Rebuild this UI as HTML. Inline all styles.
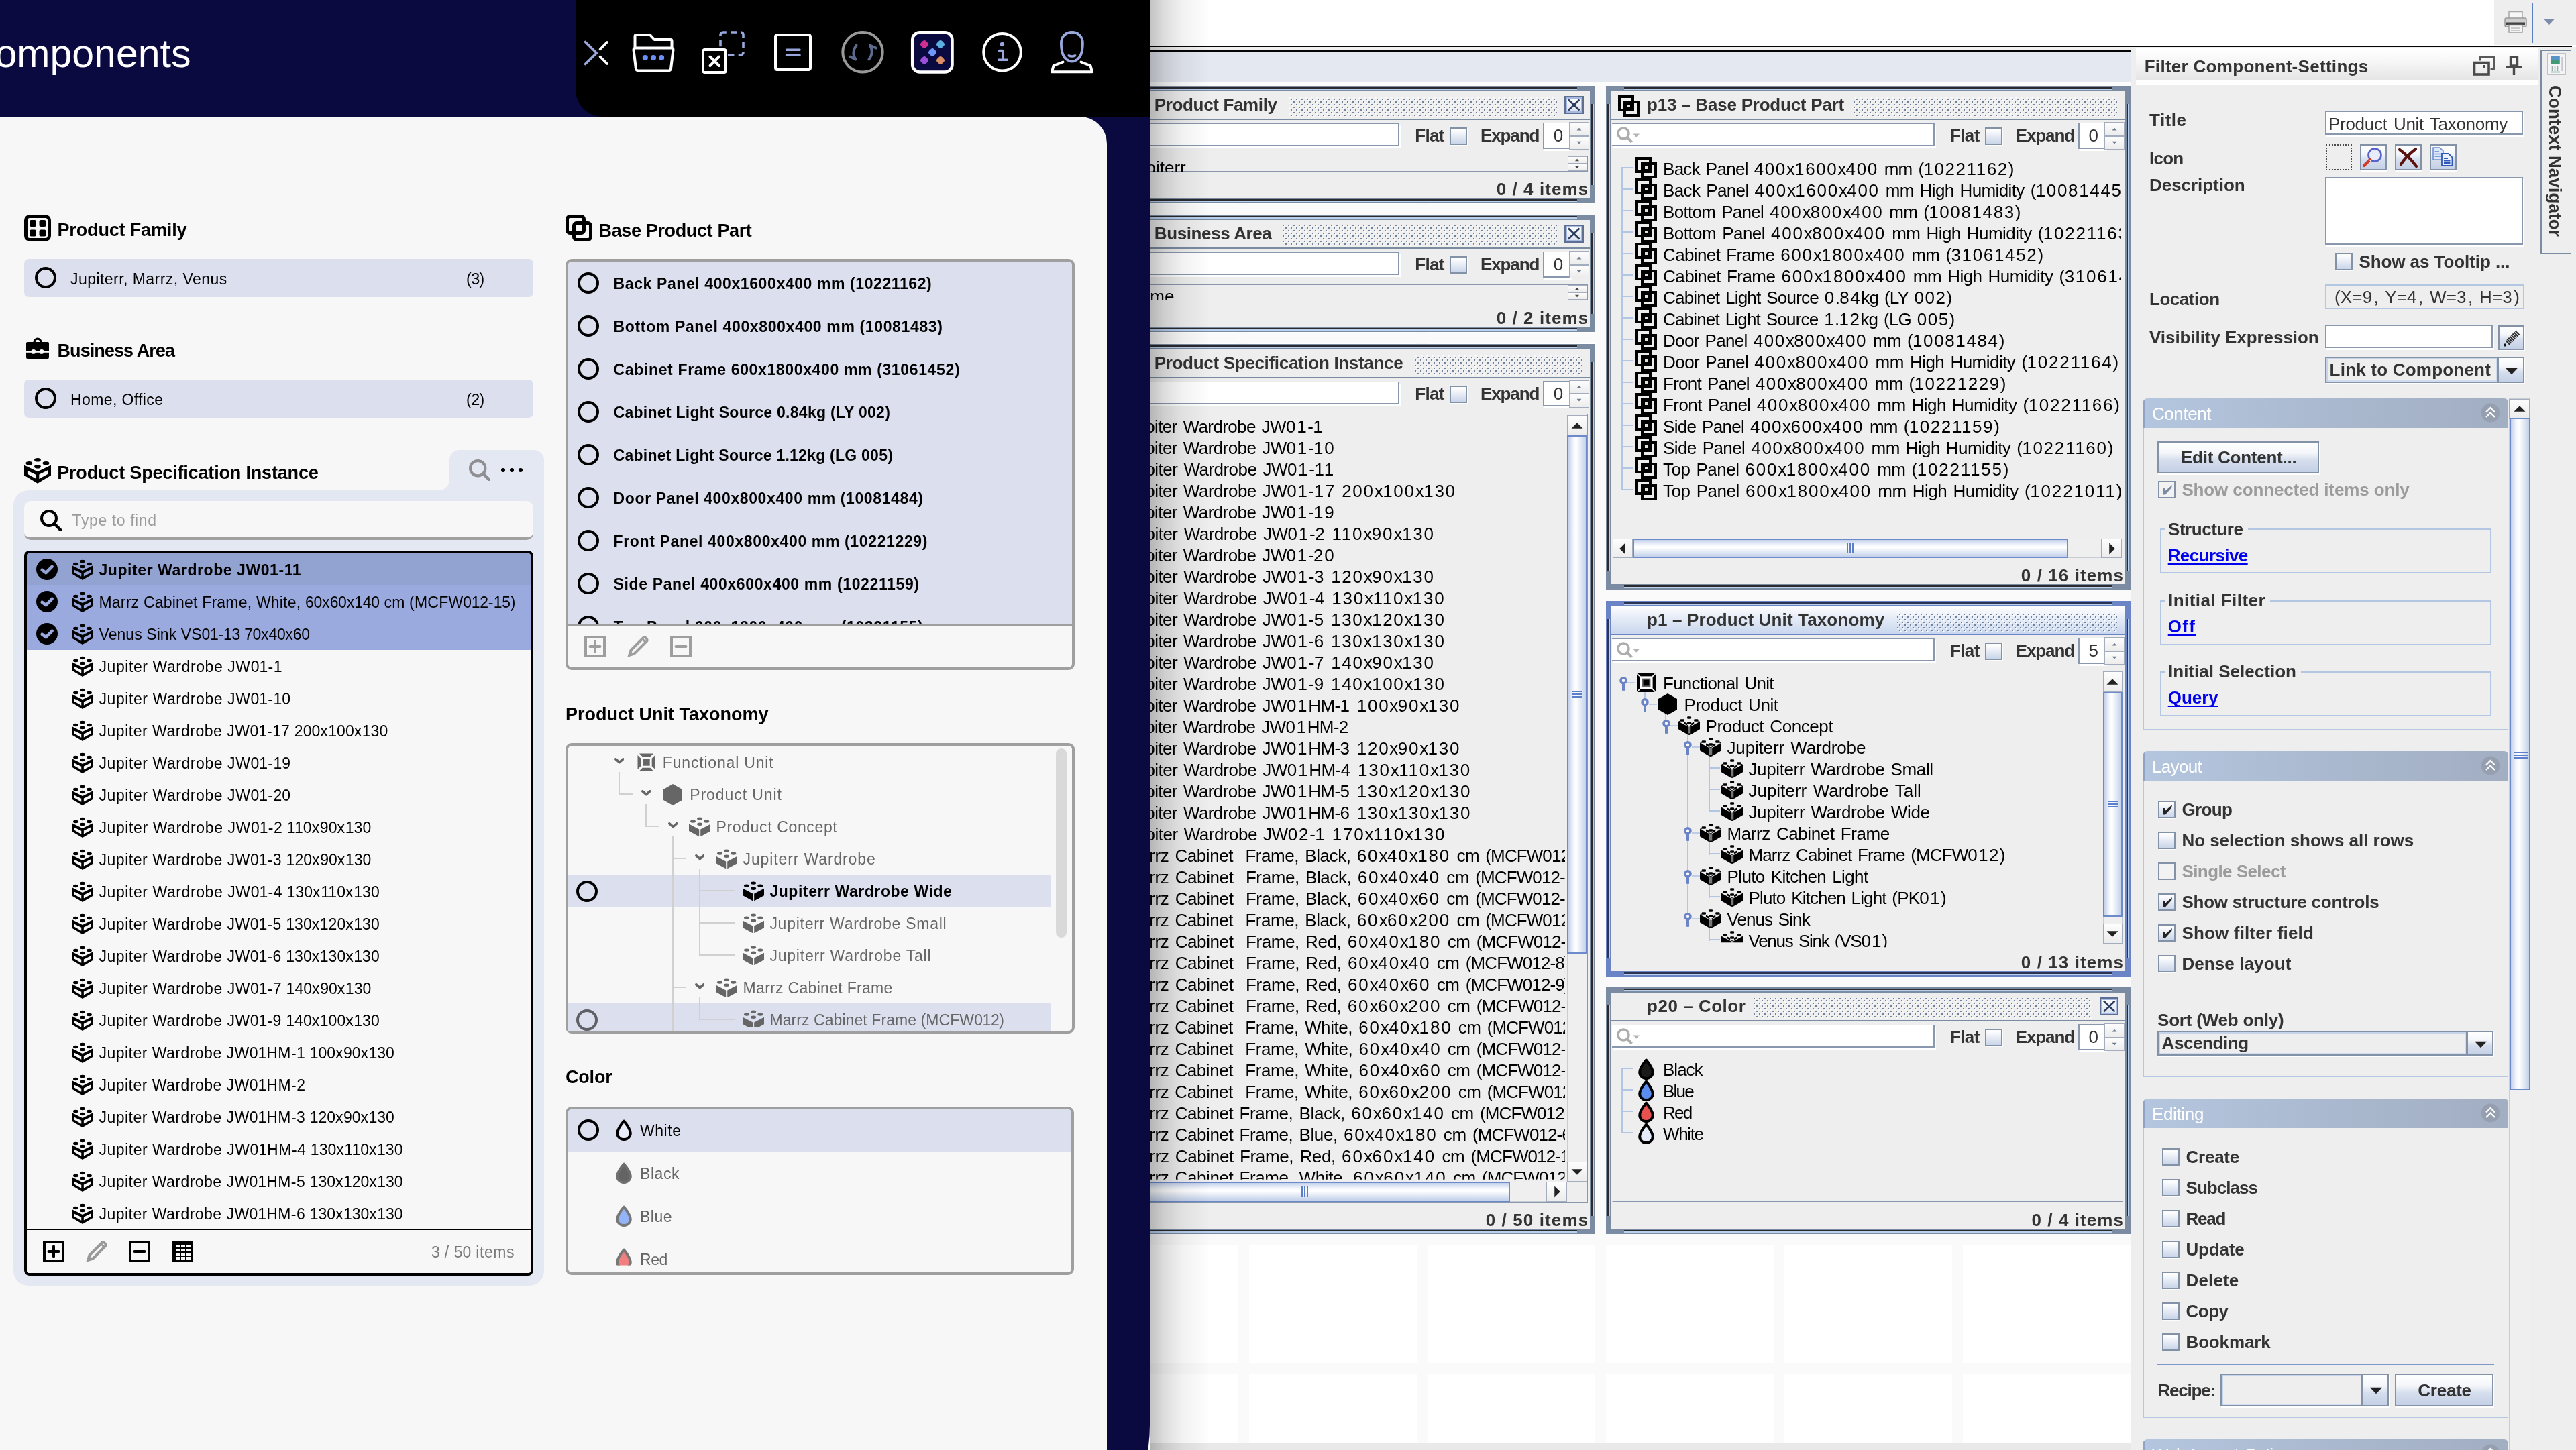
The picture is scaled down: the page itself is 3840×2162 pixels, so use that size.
<!DOCTYPE html><html><head><meta charset="utf-8"><title>Components</title><style>
html,body{margin:0;padding:0}
body{width:3840px;height:2162px;position:relative;overflow:hidden;background:#fafafa;font-family:"Liberation Sans",sans-serif;will-change:transform;}
body div,body svg{position:absolute;}
.t{white-space:pre;line-height:40px;height:40px;color:#000;letter-spacing:var(--l,0px);}
.l23 i{letter-spacing:calc(var(--l,0px) - 0.5px);}
.t i,.t em{font-style:normal;}
.l23{font-size:23px;}
.b23{font-size:23px;font-weight:bold;}
.h27{font-size:27px;font-weight:bold;}
.hd{font-size:59px;}
.s{font-size:26px;}
.sb{font-size:26px;font-weight:bold;color:#333;}

.cb{box-sizing:border-box;border:2px solid #8492a8;background:linear-gradient(#fdfdfe 10%,#e3e9f3 55%,#c9d5e9);box-shadow:1px 1px 0 rgba(255,255,255,.8);}
.cbd{box-sizing:border-box;border:2px solid #8492a8;background:#f2f2f2;}
.btn{box-sizing:border-box;border:2px solid #8492a8;background:linear-gradient(#ffffff,#f4f6fa 35%,#d5deed 60%,#c4d0e6);box-shadow:1px 2px 0 rgba(255,255,255,.9);}
.tf{box-sizing:border-box;background:#fff;border:2px solid #8a98ad;border-top-width:1.5px;box-shadow:2px 3px 0 #fff;}
.fr{background:#7b8ba1;}
.thv{box-sizing:border-box;border:2px solid #6d8acb;background:linear-gradient(to right,#c3d0ea,#f4f7fc 30%,#ffffff 45%,#dfe7f4 75%,#c3d0ea);}
.thh{box-sizing:border-box;border:2px solid #6d8acb;background:linear-gradient(#c3d0ea,#f4f7fc 30%,#ffffff 45%,#dfe7f4 75%,#c3d0ea);}
.sbb{box-sizing:border-box;border:1.5px solid #a3adbd;background:linear-gradient(#fdfdfd,#ececec);}
.trk{background:#efefef;box-sizing:border-box;border:1px solid #c8ccd4;}
.dots{background-image:radial-gradient(circle,#70829c 1.1px,rgba(0,0,0,0) 1.55px),radial-gradient(circle,#70829c 1.1px,rgba(0,0,0,0) 1.55px),radial-gradient(circle,#fff 1.1px,rgba(255,255,255,0) 1.6px),radial-gradient(circle,#fff 1.1px,rgba(255,255,255,0) 1.6px);background-size:8px 8px;background-position:0 0,4px 4px,1.5px 1.5px,5.5px 5.5px;}
.sec{background:linear-gradient(to right,#b4c6df,#aab9cf 50%,#a2aec2);border-radius:6px 6px 0 0;}
.s{word-spacing:2.400px}
.s i{letter-spacing:calc(var(--l,0px) + 2.300px)}
</style></head><body>
<svg width="0" height="0" style="position:absolute">
<defs>
<symbol id="lego" viewBox="0 0 40 40"><path fill-rule="evenodd" d="M0 11.4L20 21.2L40 11.4V26.8L20 38.8L0 26.8ZM4.9 19.7V24.7L17.8 32.1V25.9ZM22.3 25.6V31.9L35 24.9V19.3Z"/><ellipse cx="20" cy="3.8" rx="4.9" ry="2.8"/><ellipse cx="7.4" cy="8.8" rx="4.9" ry="2.8"/><ellipse cx="32.5" cy="8.8" rx="4.9" ry="2.8"/><ellipse cx="20" cy="13.8" rx="4.9" ry="2.8"/></symbol>
<symbol id="legof" viewBox="0 0 32.3 29.5"><path d="M0 10.6L15.2 18.4V29.3L0 21ZM17.2 18.4L32.3 10.6V21L17.2 29.3Z"/><ellipse cx="16.1" cy="2.6" rx="4" ry="2.2"/><ellipse cx="6" cy="6.6" rx="4" ry="2.2"/><ellipse cx="26.3" cy="6.6" rx="4" ry="2.2"/><ellipse cx="16.1" cy="10.7" rx="4" ry="2.2"/><path d="M0 10.6L2.2 8.6L5 10.2L9 10L11.5 11.6L14 13.6H18.3L21 11.5L23.5 10L27.5 10.2L30.2 8.6L32.3 10.6L17.2 18.4H15.2Z" opacity=".0"/></symbol>
<symbol id="pf" viewBox="0 0 40 40"><rect x="2.5" y="2.5" width="35" height="35" rx="6" fill="none" stroke="currentColor" stroke-width="5"/><rect x="8" y="8" width="10" height="10" rx="2.5"/><rect x="22.5" y="8" width="10" height="10" rx="2.5"/><rect x="8" y="22.5" width="10" height="10" rx="2.5"/><rect x="22.5" y="22.5" width="10" height="10" rx="2.5"/></symbol>
<symbol id="brief" viewBox="0 0 34 32"><path fill-rule="evenodd" d="M10.5 7a6.5 6.5 0 0 1 13 0h8.5a2 2 0 0 1 2 2v11.2H0V9a2 2 0 0 1 2-2ZM13.8 7h6.4a3.2 3.2 0 0 0-6.4 0Z"/><path d="M0 22.6h34V30a2 2 0 0 1-2 2H2a2 2 0 0 1-2-2Z"/><circle cx="10.8" cy="21.4" r="3.4" fill="#f7f7f7"/><circle cx="23" cy="21.4" r="3.4" fill="#f7f7f7"/><rect x="0" y="20.2" width="34" height="2.4" fill="#f7f7f7"/></symbol>
<symbol id="bpp" viewBox="0 0 40 40"><rect x="2.5" y="2.5" width="25" height="25" rx="4" fill="none" stroke="currentColor" stroke-width="5"/><rect x="12.5" y="12.5" width="25" height="25" rx="4" fill="none" stroke="currentColor" stroke-width="5"/></symbol>
<symbol id="fu" viewBox="0 0 27 27"><path d="M3 0.5H24L19.3 5.3H7.7ZM3 26.5H24L19.3 21.7H7.7ZM0.5 3V24L5.3 19.3V7.7ZM26.5 3V24L21.7 19.3V7.7Z"/><rect x="8.3" y="8.3" width="10.4" height="10.4"/></symbol>
<symbol id="hex" viewBox="0 0 28 32"><path d="M14 0L28 8V24L14 32L0 24V8Z"/></symbol>
<symbol id="chev" viewBox="0 0 16 10"><path d="M2 2L8 7.2L14 2" fill="none" stroke="currentColor" stroke-width="4" stroke-linecap="round" stroke-linejoin="round"/></symbol>
<symbol id="drop" viewBox="0 0 24 32"><path d="M12 2.5C12 2.5 2.2 14.5 2.2 20.8A9.8 9.3 0 0 0 21.8 20.8C21.8 14.5 12 2.5 12 2.5Z" stroke="currentColor" stroke-width="4" stroke-linejoin="round"/></symbol>
<symbol id="search" viewBox="0 0 32 32"><circle cx="13" cy="13" r="11" fill="none" stroke="currentColor" stroke-width="4"/><path d="M21 21L30 30" stroke="currentColor" stroke-width="4.4" stroke-linecap="round"/></symbol>
<symbol id="plus" viewBox="0 0 32 32"><rect x="2" y="2" width="28" height="28" fill="none" stroke="currentColor" stroke-width="4"/><path d="M8.5 16H23.5M16 8.5V23.5" stroke="currentColor" stroke-width="4" stroke-linecap="round"/></symbol>
<symbol id="minus" viewBox="0 0 32 32"><rect x="2" y="2" width="28" height="28" fill="none" stroke="currentColor" stroke-width="4"/><path d="M8.5 16H23.5" stroke="currentColor" stroke-width="4" stroke-linecap="round"/></symbol>
<symbol id="pencil" viewBox="0 0 32 32"><path fill-rule="evenodd" d="M0.3 31.7L3.6 20.6L22.6 1.6a4.2 4.2 0 0 1 6 0l1.8 1.8a4.2 4.2 0 0 1 0 6L11.4 28.4ZM6.6 25.4l3.2-1L25 9.2L22.8 7L7.6 22.2ZM24.6 4.6l2.8 2.8a1.4 1.4 0 0 0 0-2l-0.8-0.8a1.4 1.4 0 0 0-2 0Z"/></symbol>
<symbol id="grid" viewBox="0 0 32 32"><path fill-rule="evenodd" d="M2 0H30a2 2 0 0 1 2 2V30a2 2 0 0 1-2 2H2a2 2 0 0 1-2-2V2a2 2 0 0 1 2-2ZM6 6v4h6V6ZM14 6v4h6V6ZM22 6v4h6V6ZM6 12v4h6v-4ZM14 12v4h6v-4ZM22 12v4h6v-4ZM6 18v4h6v-4ZM14 18v4h6v-4ZM22 18v4h6v-4ZM6 24v4h6v-4ZM14 24v4h6v-4ZM22 24v4h6v-4Z"/></symbol>
<symbol id="check" viewBox="0 0 32 32"><circle cx="16" cy="16" r="16"/><path d="M8.7 16.8L14.5 21.1L23.6 11.8" fill="none" stroke="var(--bg)" stroke-width="4.6" stroke-linecap="round" stroke-linejoin="round"/></symbol>
<symbol id="legos" viewBox="0 0 32 28"><path d="M0 7.700L14.100 15.300V27.400L0 19.300ZM18.100 15.300L32 7.700V19.300L18.100 27.400Z"/><rect x="14.100" y="15.800" width="4" height="10.200" fill="#777"/><path d="M14.100 25.600H18.100V27.400L16.100 28L14.100 27.400Z"/><rect x="13.100" y="0.200" width="6" height="3.500" rx="1.200"/><rect x="2.700" y="4.200" width="6.300" height="3.500" rx="1.200"/><rect x="23.200" y="4.200" width="6.300" height="3.500" rx="1.200"/><rect x="13.100" y="8.200" width="6" height="3.600" rx="1.200"/><path d="M0 7.700L2.700 6.500V8.500ZM32 7.700L29.400 6.500V8.500ZM9 8.500L13.100 10.500V12.800L16.100 14.500L19.100 12.800V10.500L23.200 8.500L23.200 11.500L16.100 15.500L9 11.500Z" opacity="1"/></symbol>
<symbol id="fus" viewBox="0 0 28 28"><rect x="0" y="0" width="28" height="28" rx="2"/><rect x="4.400" y="4.400" width="19.200" height="19.200" fill="#fff"/><rect x="7.600" y="7.600" width="12.800" height="12.800" fill="#666"/><rect x="9.600" y="9.600" width="8.800" height="8.800"/><path d="M0.500 0.500L5.500 5.500M27.500 0.500L22.500 5.500M0.500 27.500L5.500 22.500M27.500 27.500L22.500 22.500" stroke="#fff" stroke-width="1.700"/></symbol>
</defs></svg>
<div style="left:1714px;top:0px;width:2126px;height:70px;background:#fff;"></div><div style="left:3718px;top:0px;width:122px;height:66.7px;background:#eeeeee;"></div><div style="left:1714px;top:67.7px;width:2120px;height:2.4px;background:#050505;"></div><div style="left:1714px;top:70.1px;width:1462px;height:4.7px;background:#f0f0f0;"></div><div style="left:1714px;top:74.8px;width:1462px;height:2.4px;background:#050505;"></div><div style="left:1714px;top:77.2px;width:1462px;height:44.6px;background:#e4e8f1;"></div><div style="left:1714px;top:122px;width:1462px;height:6px;background:#fdfdfd;"></div><div style="left:1714px;top:128px;width:1461.5px;height:2024px;overflow:hidden;background:#fafafa;"><div style="left:calc(-1714px + 1329.8px);top:calc(-128px + 128px);width:250px;height:176px;background:#fff;"></div><div style="left:calc(-1714px + 1329.8px);top:calc(-128px + 320px);width:250px;height:176px;background:#fff;"></div><div style="left:calc(-1714px + 1329.8px);top:calc(-128px + 512px);width:250px;height:176px;background:#fff;"></div><div style="left:calc(-1714px + 1329.8px);top:calc(-128px + 704px);width:250px;height:176px;background:#fff;"></div><div style="left:calc(-1714px + 1329.8px);top:calc(-128px + 896px);width:250px;height:176px;background:#fff;"></div><div style="left:calc(-1714px + 1329.8px);top:calc(-128px + 1088px);width:250px;height:176px;background:#fff;"></div><div style="left:calc(-1714px + 1329.8px);top:calc(-128px + 1280px);width:250px;height:176px;background:#fff;"></div><div style="left:calc(-1714px + 1329.8px);top:calc(-128px + 1472px);width:250px;height:176px;background:#fff;"></div><div style="left:calc(-1714px + 1329.8px);top:calc(-128px + 1664px);width:250px;height:176px;background:#fff;"></div><div style="left:calc(-1714px + 1329.8px);top:calc(-128px + 1856px);width:250px;height:176px;background:#fff;"></div><div style="left:calc(-1714px + 1329.8px);top:calc(-128px + 2048px);width:250px;height:176px;background:#fff;"></div><div style="left:calc(-1714px + 1595.8px);top:calc(-128px + 128px);width:250px;height:176px;background:#fff;"></div><div style="left:calc(-1714px + 1595.8px);top:calc(-128px + 320px);width:250px;height:176px;background:#fff;"></div><div style="left:calc(-1714px + 1595.8px);top:calc(-128px + 512px);width:250px;height:176px;background:#fff;"></div><div style="left:calc(-1714px + 1595.8px);top:calc(-128px + 704px);width:250px;height:176px;background:#fff;"></div><div style="left:calc(-1714px + 1595.8px);top:calc(-128px + 896px);width:250px;height:176px;background:#fff;"></div><div style="left:calc(-1714px + 1595.8px);top:calc(-128px + 1088px);width:250px;height:176px;background:#fff;"></div><div style="left:calc(-1714px + 1595.8px);top:calc(-128px + 1280px);width:250px;height:176px;background:#fff;"></div><div style="left:calc(-1714px + 1595.8px);top:calc(-128px + 1472px);width:250px;height:176px;background:#fff;"></div><div style="left:calc(-1714px + 1595.8px);top:calc(-128px + 1664px);width:250px;height:176px;background:#fff;"></div><div style="left:calc(-1714px + 1595.8px);top:calc(-128px + 1856px);width:250px;height:176px;background:#fff;"></div><div style="left:calc(-1714px + 1595.8px);top:calc(-128px + 2048px);width:250px;height:176px;background:#fff;"></div><div style="left:calc(-1714px + 1861.8px);top:calc(-128px + 128px);width:250px;height:176px;background:#fff;"></div><div style="left:calc(-1714px + 1861.8px);top:calc(-128px + 320px);width:250px;height:176px;background:#fff;"></div><div style="left:calc(-1714px + 1861.8px);top:calc(-128px + 512px);width:250px;height:176px;background:#fff;"></div><div style="left:calc(-1714px + 1861.8px);top:calc(-128px + 704px);width:250px;height:176px;background:#fff;"></div><div style="left:calc(-1714px + 1861.8px);top:calc(-128px + 896px);width:250px;height:176px;background:#fff;"></div><div style="left:calc(-1714px + 1861.8px);top:calc(-128px + 1088px);width:250px;height:176px;background:#fff;"></div><div style="left:calc(-1714px + 1861.8px);top:calc(-128px + 1280px);width:250px;height:176px;background:#fff;"></div><div style="left:calc(-1714px + 1861.8px);top:calc(-128px + 1472px);width:250px;height:176px;background:#fff;"></div><div style="left:calc(-1714px + 1861.8px);top:calc(-128px + 1664px);width:250px;height:176px;background:#fff;"></div><div style="left:calc(-1714px + 1861.8px);top:calc(-128px + 1856px);width:250px;height:176px;background:#fff;"></div><div style="left:calc(-1714px + 1861.8px);top:calc(-128px + 2048px);width:250px;height:176px;background:#fff;"></div><div style="left:calc(-1714px + 2127.8px);top:calc(-128px + 128px);width:250px;height:176px;background:#fff;"></div><div style="left:calc(-1714px + 2127.8px);top:calc(-128px + 320px);width:250px;height:176px;background:#fff;"></div><div style="left:calc(-1714px + 2127.8px);top:calc(-128px + 512px);width:250px;height:176px;background:#fff;"></div><div style="left:calc(-1714px + 2127.8px);top:calc(-128px + 704px);width:250px;height:176px;background:#fff;"></div><div style="left:calc(-1714px + 2127.8px);top:calc(-128px + 896px);width:250px;height:176px;background:#fff;"></div><div style="left:calc(-1714px + 2127.8px);top:calc(-128px + 1088px);width:250px;height:176px;background:#fff;"></div><div style="left:calc(-1714px + 2127.8px);top:calc(-128px + 1280px);width:250px;height:176px;background:#fff;"></div><div style="left:calc(-1714px + 2127.8px);top:calc(-128px + 1472px);width:250px;height:176px;background:#fff;"></div><div style="left:calc(-1714px + 2127.8px);top:calc(-128px + 1664px);width:250px;height:176px;background:#fff;"></div><div style="left:calc(-1714px + 2127.8px);top:calc(-128px + 1856px);width:250px;height:176px;background:#fff;"></div><div style="left:calc(-1714px + 2127.8px);top:calc(-128px + 2048px);width:250px;height:176px;background:#fff;"></div><div style="left:calc(-1714px + 2393.8px);top:calc(-128px + 128px);width:250px;height:176px;background:#fff;"></div><div style="left:calc(-1714px + 2393.8px);top:calc(-128px + 320px);width:250px;height:176px;background:#fff;"></div><div style="left:calc(-1714px + 2393.8px);top:calc(-128px + 512px);width:250px;height:176px;background:#fff;"></div><div style="left:calc(-1714px + 2393.8px);top:calc(-128px + 704px);width:250px;height:176px;background:#fff;"></div><div style="left:calc(-1714px + 2393.8px);top:calc(-128px + 896px);width:250px;height:176px;background:#fff;"></div><div style="left:calc(-1714px + 2393.8px);top:calc(-128px + 1088px);width:250px;height:176px;background:#fff;"></div><div style="left:calc(-1714px + 2393.8px);top:calc(-128px + 1280px);width:250px;height:176px;background:#fff;"></div><div style="left:calc(-1714px + 2393.8px);top:calc(-128px + 1472px);width:250px;height:176px;background:#fff;"></div><div style="left:calc(-1714px + 2393.8px);top:calc(-128px + 1664px);width:250px;height:176px;background:#fff;"></div><div style="left:calc(-1714px + 2393.8px);top:calc(-128px + 1856px);width:250px;height:176px;background:#fff;"></div><div style="left:calc(-1714px + 2393.8px);top:calc(-128px + 2048px);width:250px;height:176px;background:#fff;"></div><div style="left:calc(-1714px + 2659.8px);top:calc(-128px + 128px);width:250px;height:176px;background:#fff;"></div><div style="left:calc(-1714px + 2659.8px);top:calc(-128px + 320px);width:250px;height:176px;background:#fff;"></div><div style="left:calc(-1714px + 2659.8px);top:calc(-128px + 512px);width:250px;height:176px;background:#fff;"></div><div style="left:calc(-1714px + 2659.8px);top:calc(-128px + 704px);width:250px;height:176px;background:#fff;"></div><div style="left:calc(-1714px + 2659.8px);top:calc(-128px + 896px);width:250px;height:176px;background:#fff;"></div><div style="left:calc(-1714px + 2659.8px);top:calc(-128px + 1088px);width:250px;height:176px;background:#fff;"></div><div style="left:calc(-1714px + 2659.8px);top:calc(-128px + 1280px);width:250px;height:176px;background:#fff;"></div><div style="left:calc(-1714px + 2659.8px);top:calc(-128px + 1472px);width:250px;height:176px;background:#fff;"></div><div style="left:calc(-1714px + 2659.8px);top:calc(-128px + 1664px);width:250px;height:176px;background:#fff;"></div><div style="left:calc(-1714px + 2659.8px);top:calc(-128px + 1856px);width:250px;height:176px;background:#fff;"></div><div style="left:calc(-1714px + 2659.8px);top:calc(-128px + 2048px);width:250px;height:176px;background:#fff;"></div><div style="left:calc(-1714px + 2925.8px);top:calc(-128px + 128px);width:250px;height:176px;background:#fff;"></div><div style="left:calc(-1714px + 2925.8px);top:calc(-128px + 320px);width:250px;height:176px;background:#fff;"></div><div style="left:calc(-1714px + 2925.8px);top:calc(-128px + 512px);width:250px;height:176px;background:#fff;"></div><div style="left:calc(-1714px + 2925.8px);top:calc(-128px + 704px);width:250px;height:176px;background:#fff;"></div><div style="left:calc(-1714px + 2925.8px);top:calc(-128px + 896px);width:250px;height:176px;background:#fff;"></div><div style="left:calc(-1714px + 2925.8px);top:calc(-128px + 1088px);width:250px;height:176px;background:#fff;"></div><div style="left:calc(-1714px + 2925.8px);top:calc(-128px + 1280px);width:250px;height:176px;background:#fff;"></div><div style="left:calc(-1714px + 2925.8px);top:calc(-128px + 1472px);width:250px;height:176px;background:#fff;"></div><div style="left:calc(-1714px + 2925.8px);top:calc(-128px + 1664px);width:250px;height:176px;background:#fff;"></div><div style="left:calc(-1714px + 2925.8px);top:calc(-128px + 1856px);width:250px;height:176px;background:#fff;"></div><div style="left:calc(-1714px + 2925.8px);top:calc(-128px + 2048px);width:250px;height:176px;background:#fff;"></div></div><div style="left:1714px;top:2151.5px;width:1462px;height:11px;background:#e9e9e9;"></div><div style="left:1596px;top:128px;width:781.7px;height:175px;background:#7b8ba1;"></div><div style="left:1623px;top:130px;width:727.7px;height:2px;background:#2b2b2e;"></div><div style="left:1623px;top:132px;width:727.7px;height:2px;background:#b9d0ef;"></div><div style="left:1623px;top:297px;width:727.7px;height:2px;background:#2b2b2e;"></div><div style="left:1623px;top:299px;width:727.7px;height:2px;background:#b9d0ef;"></div><div style="left:1598px;top:155px;width:2px;height:121px;background:#2b2b2e;"></div><div style="left:1600px;top:155px;width:2px;height:121px;background:#b9d0ef;"></div><div style="left:2371.7px;top:155px;width:2px;height:121px;background:#2b2b2e;"></div><div style="left:2373.7px;top:155px;width:2px;height:121px;background:#b9d0ef;"></div><div style="left:1604px;top:136px;width:765.7px;height:159px;background:#eeeeee;"></div><div style="left:1604px;top:136px;width:765.7px;height:41px;background:#eeeeee;"></div><div style="left:1604px;top:177px;width:765.7px;height:2px;background:#7b8ba1;"></div><div class="dots" style="left:1920.7px;top:144px;width:400px;height:31px;"></div><div style="left:2332px;top:142.6px;width:28.5px;height:27px;box-sizing:border-box;border:2px solid #5d6f93;background:linear-gradient(#fff,#d8e0ee);box-shadow:inset 0 0 0 2px #a7b9e0;"></div><svg style="left:2332px;top:142.6px" width="28.5" height="27" viewBox="0 0 28.5 27"><path d="M6 5.500L22.500 21.500M22.500 5.500L6 21.500" stroke="#2b3c5c" stroke-width="2.600"/></svg><div class="tf" style="left:1604.5px;top:184px;width:481.7px;height:34px;border-left-width:0;"></div><div class="cb" style="left:2161.2px;top:190px;width:26px;height:26px;"></div><div class="tf" style="left:2300.2px;top:183px;width:41px;height:38.6px;"></div><div class="sbb" style="left:2339.2px;top:182px;width:30px;height:20.5px;"></div><div class="sbb" style="left:2339.2px;top:202.5px;width:30px;height:20.5px;"></div><svg style="left:2347.2px;top:188.9px" width="14" height="7.2" viewBox="2347.2 188.9 14 7.2"><polygon points="2350.7,194.3 2357.7,194.3 2354.2,190.7" fill="#6d7b90"/></svg><svg style="left:2347.2px;top:208.9px" width="14" height="7.2" viewBox="2347.2 208.9 14 7.2"><polygon points="2350.7,210.7 2357.7,210.7 2354.2,214.3" fill="#6d7b90"/></svg><div style="left:1605px;top:232px;width:762px;height:23.6px;box-sizing:border-box;border:1.5px solid #8a98ad;border-left-color:rgba(0,0,0,0);background:#eeeeee;overflow:hidden;"></div><div class="sbb" style="left:2336.5px;top:233px;width:29.5px;height:11px;"></div><div class="sbb" style="left:2336.5px;top:244px;width:29.5px;height:11px;"></div><svg style="left:2345px;top:234.5px" width="12" height="7.0" viewBox="2345 234.5 12 7.0"><polygon points="2348.0,239.75 2354.0,239.75 2351,236.25" fill="#444"/></svg><svg style="left:2345px;top:246px" width="12" height="7.0" viewBox="2345 246.0 12 7.0"><polygon points="2348.0,247.75 2354.0,247.75 2351,251.25" fill="#444"/></svg><div style="left:1596px;top:320px;width:781.7px;height:175px;background:#7b8ba1;"></div><div style="left:1623px;top:322px;width:727.7px;height:2px;background:#2b2b2e;"></div><div style="left:1623px;top:324px;width:727.7px;height:2px;background:#b9d0ef;"></div><div style="left:1623px;top:489px;width:727.7px;height:2px;background:#2b2b2e;"></div><div style="left:1623px;top:491px;width:727.7px;height:2px;background:#b9d0ef;"></div><div style="left:1598px;top:347px;width:2px;height:121px;background:#2b2b2e;"></div><div style="left:1600px;top:347px;width:2px;height:121px;background:#b9d0ef;"></div><div style="left:2371.7px;top:347px;width:2px;height:121px;background:#2b2b2e;"></div><div style="left:2373.7px;top:347px;width:2px;height:121px;background:#b9d0ef;"></div><div style="left:1604px;top:328px;width:765.7px;height:159px;background:#eeeeee;"></div><div style="left:1604px;top:328px;width:765.7px;height:41px;background:#eeeeee;"></div><div style="left:1604px;top:369px;width:765.7px;height:2px;background:#7b8ba1;"></div><div class="dots" style="left:1912.7px;top:336px;width:408px;height:31px;"></div><div style="left:2332px;top:334.6px;width:28.5px;height:27px;box-sizing:border-box;border:2px solid #5d6f93;background:linear-gradient(#fff,#d8e0ee);box-shadow:inset 0 0 0 2px #a7b9e0;"></div><svg style="left:2332px;top:334.6px" width="28.5" height="27" viewBox="0 0 28.5 27"><path d="M6 5.500L22.500 21.500M22.500 5.500L6 21.500" stroke="#2b3c5c" stroke-width="2.600"/></svg><div class="tf" style="left:1604.5px;top:376px;width:481.7px;height:34px;border-left-width:0;"></div><div class="cb" style="left:2161.2px;top:382px;width:26px;height:26px;"></div><div class="tf" style="left:2300.2px;top:375px;width:41px;height:38.6px;"></div><div class="sbb" style="left:2339.2px;top:374px;width:30px;height:20.5px;"></div><div class="sbb" style="left:2339.2px;top:394.5px;width:30px;height:20.5px;"></div><svg style="left:2347.2px;top:380.9px" width="14" height="7.2" viewBox="2347.2 380.9 14 7.2"><polygon points="2350.7,386.3 2357.7,386.3 2354.2,382.7" fill="#6d7b90"/></svg><svg style="left:2347.2px;top:400.9px" width="14" height="7.2" viewBox="2347.2 400.9 14 7.2"><polygon points="2350.7,402.7 2357.7,402.7 2354.2,406.3" fill="#6d7b90"/></svg><div style="left:1605px;top:424px;width:762px;height:23.6px;box-sizing:border-box;border:1.5px solid #8a98ad;border-left-color:rgba(0,0,0,0);background:#eeeeee;overflow:hidden;"></div><div class="sbb" style="left:2336.5px;top:425px;width:29.5px;height:11px;"></div><div class="sbb" style="left:2336.5px;top:436px;width:29.5px;height:11px;"></div><svg style="left:2345px;top:426.5px" width="12" height="7.0" viewBox="2345 426.5 12 7.0"><polygon points="2348.0,431.75 2354.0,431.75 2351,428.25" fill="#444"/></svg><svg style="left:2345px;top:438px" width="12" height="7.0" viewBox="2345 438.0 12 7.0"><polygon points="2348.0,439.75 2354.0,439.75 2351,443.25" fill="#444"/></svg><div style="left:1596px;top:512.5px;width:781.7px;height:1327.5px;background:#7b8ba1;"></div><div style="left:1623px;top:514.5px;width:727.7px;height:2px;background:#2b2b2e;"></div><div style="left:1623px;top:516.5px;width:727.7px;height:2px;background:#b9d0ef;"></div><div style="left:1623px;top:1834px;width:727.7px;height:2px;background:#2b2b2e;"></div><div style="left:1623px;top:1836px;width:727.7px;height:2px;background:#b9d0ef;"></div><div style="left:1598px;top:539.5px;width:2px;height:1273.5px;background:#2b2b2e;"></div><div style="left:1600px;top:539.5px;width:2px;height:1273.5px;background:#b9d0ef;"></div><div style="left:2371.7px;top:539.5px;width:2px;height:1273.5px;background:#2b2b2e;"></div><div style="left:2373.7px;top:539.5px;width:2px;height:1273.5px;background:#b9d0ef;"></div><div style="left:1604px;top:520.5px;width:765.7px;height:1311.5px;background:#eeeeee;"></div><div style="left:1604px;top:520.5px;width:765.7px;height:41px;background:#eeeeee;"></div><div style="left:1604px;top:561.5px;width:765.7px;height:2px;background:#7b8ba1;"></div><div class="dots" style="left:2110.2px;top:528.5px;width:248px;height:31px;"></div><div class="tf" style="left:1604.5px;top:568.5px;width:481.7px;height:34px;border-left-width:0;"></div><div class="cb" style="left:2161.2px;top:574.5px;width:26px;height:26px;"></div><div class="tf" style="left:2300.2px;top:567.5px;width:41px;height:38.6px;"></div><div class="sbb" style="left:2339.2px;top:566.5px;width:30px;height:20.5px;"></div><div class="sbb" style="left:2339.2px;top:587px;width:30px;height:20.5px;"></div><svg style="left:2347.2px;top:573.4px" width="14" height="7.2" viewBox="2347.2 573.4 14 7.2"><polygon points="2350.7,578.8 2357.7,578.8 2354.2,575.2" fill="#6d7b90"/></svg><svg style="left:2347.2px;top:593.4px" width="14" height="7.2" viewBox="2347.2 593.4 14 7.2"><polygon points="2350.7,595.2 2357.7,595.2 2354.2,598.8" fill="#6d7b90"/></svg><div style="left:1605px;top:617px;width:762px;height:1175.5px;box-sizing:border-box;border:1.5px solid #8a98ad;border-left-color:rgba(0,0,0,0);background:#eeeeee;"></div><div class="trk" style="left:2336px;top:618.5px;width:30px;height:1143.5px;"></div><div class="sbb" style="left:2336px;top:618.5px;width:30px;height:30.5px;"></div><svg style="left:2334px;top:625.5px" width="34" height="17.0" viewBox="2334.0 625.5 34 17.0"><polygon points="2342.5,638.25 2359.5,638.25 2351.0,629.75" fill="#222"/></svg><div class="sbb" style="left:2336px;top:1731.5px;width:30px;height:30.5px;"></div><svg style="left:2334px;top:1738.5px" width="34" height="17.0" viewBox="2334.0 1738.5 34 17.0"><polygon points="2342.5,1742.75 2359.5,1742.75 2351.0,1751.25" fill="#222"/></svg><div class="thv" style="left:2336px;top:649px;width:30px;height:772.7px;"></div><div style="left:2343px;top:1030.35px;width:16px;height:2px;background:#5b7fcb;"></div><div style="left:2343px;top:1034.35px;width:16px;height:2px;background:#5b7fcb;"></div><div style="left:2343px;top:1038.35px;width:16px;height:2px;background:#5b7fcb;"></div><div class="trk" style="left:1606px;top:1762px;width:730px;height:29.5px;"></div><div class="sbb" style="left:2305px;top:1762px;width:31px;height:29.5px;"></div><svg style="left:2312.5px;top:1759.75px" width="17.0" height="34" viewBox="2312.5 1759.75 17.0 34"><polygon points="2316.75,1768.25 2316.75,1785.25 2325.25,1776.75" fill="#222"/></svg><div class="thh" style="left:1606px;top:1762px;width:644.7px;height:29.5px;"></div><div style="left:1601px;top:1769px;width:2px;height:15.5px;background:#5b7fcb;"></div><div style="left:1605px;top:1769px;width:2px;height:15.5px;background:#5b7fcb;"></div><div style="left:1609px;top:1769px;width:2px;height:15.5px;background:#5b7fcb;"></div><div style="left:1939.9px;top:1769px;width:2px;height:15.5px;background:#5b7fcb;"></div><div style="left:1943.9px;top:1769px;width:2px;height:15.5px;background:#5b7fcb;"></div><div style="left:1947.9px;top:1769px;width:2px;height:15.5px;background:#5b7fcb;"></div><div style="left:2336px;top:1762px;width:30px;height:29.5px;background:#eee;"></div><div style="left:2394px;top:128px;width:781.5px;height:751px;background:#7b8ba1;"></div><div style="left:2421px;top:130px;width:727.5px;height:2px;background:#2b2b2e;"></div><div style="left:2421px;top:132px;width:727.5px;height:2px;background:#b9d0ef;"></div><div style="left:2421px;top:873px;width:727.5px;height:2px;background:#2b2b2e;"></div><div style="left:2421px;top:875px;width:727.5px;height:2px;background:#b9d0ef;"></div><div style="left:2396px;top:155px;width:2px;height:697px;background:#2b2b2e;"></div><div style="left:2398px;top:155px;width:2px;height:697px;background:#b9d0ef;"></div><div style="left:3169.5px;top:155px;width:2px;height:697px;background:#2b2b2e;"></div><div style="left:3171.5px;top:155px;width:2px;height:697px;background:#b9d0ef;"></div><div style="left:2402px;top:136px;width:765.5px;height:735px;background:#eeeeee;"></div><div style="left:2402px;top:136px;width:765.5px;height:41px;background:#eeeeee;"></div><div style="left:2402px;top:177px;width:765.5px;height:2px;background:#7b8ba1;"></div><svg style="left:2412px;top:142px" width="32" height="32" viewBox="0 0 32 32" fill="none" stroke="#000" stroke-width="4"><rect x="2" y="2" width="20" height="20"/><rect x="10" y="10" width="20" height="20"/><rect x="12" y="12" width="8" height="8" fill="#000" stroke="none"/><rect x="14" y="14" width="4" height="4" fill="#ddd" stroke="none"/></svg><div class="dots" style="left:2764px;top:144px;width:392px;height:31px;"></div><div class="tf" style="left:2402.5px;top:184px;width:481.5px;height:34px;border-left-width:0;"></div><svg style="left:2410px;top:189px" width="36" height="26" viewBox="0 0 36 26" fill="none"><circle cx="10" cy="10" r="8" stroke="#adadad" stroke-width="3.600"/><path d="M16 16L22.500 23" stroke="#adadad" stroke-width="4"/><path d="M24.500 10.500H34L29.200 15.800Z" fill="#b3b3b3"/></svg><div class="cb" style="left:2959px;top:190px;width:26px;height:26px;"></div><div class="tf" style="left:3098px;top:183px;width:41px;height:38.6px;"></div><div class="sbb" style="left:3137px;top:182px;width:30px;height:20.5px;"></div><div class="sbb" style="left:3137px;top:202.5px;width:30px;height:20.5px;"></div><svg style="left:3145px;top:188.9px" width="14" height="7.2" viewBox="3145.0 188.9 14 7.2"><polygon points="3148.5,194.3 3155.5,194.3 3152.0,190.7" fill="#6d7b90"/></svg><svg style="left:3145px;top:208.9px" width="14" height="7.2" viewBox="3145.0 208.9 14 7.2"><polygon points="3148.5,210.7 3155.5,210.7 3152.0,214.3" fill="#6d7b90"/></svg><div style="left:2403px;top:232px;width:762px;height:571.5px;box-sizing:border-box;border:1.5px solid #8a98ad;border-left-color:rgba(0,0,0,0);border-bottom:none;background:#eeeeee;"></div><div class="trk" style="left:2404px;top:803.4px;width:759.4px;height:28.5px;"></div><div class="sbb" style="left:2404px;top:803.4px;width:30px;height:28.5px;"></div><svg style="left:2409.5px;top:800.65px" width="17.0" height="34" viewBox="2409.5 800.65 17.0 34"><polygon points="2422.25,809.15 2422.25,826.15 2413.75,817.65" fill="#222"/></svg><div class="sbb" style="left:3132.4px;top:803.4px;width:31px;height:28.5px;"></div><svg style="left:3139.9px;top:800.65px" width="17.0" height="34" viewBox="3139.9 800.65 17.0 34"><polygon points="3144.15,809.15 3144.15,826.15 3152.65,817.65" fill="#222"/></svg><div class="thh" style="left:2433.5px;top:803.4px;width:649.9px;height:28.5px;"></div><div style="left:2753.45px;top:810.4px;width:2px;height:14.5px;background:#5b7fcb;"></div><div style="left:2757.45px;top:810.4px;width:2px;height:14.5px;background:#5b7fcb;"></div><div style="left:2761.45px;top:810.4px;width:2px;height:14.5px;background:#5b7fcb;"></div><div style="left:2417px;top:249px;width:2px;height:482px;background:#b0c6e4;"></div><div style="left:2418px;top:249px;width:17px;height:2px;background:#b0c6e4;"></div><svg style="left:2438px;top:234.2px" width="32" height="32" viewBox="0 0 32 32" fill="none" stroke="#000" stroke-width="4"><rect x="2" y="2" width="20" height="20"/><rect x="10" y="10" width="20" height="20"/><rect x="12" y="12" width="8" height="8" fill="#000" stroke="none"/><rect x="14" y="14" width="4" height="4" fill="#e0e0e0" stroke="none"/></svg><div style="left:2418px;top:281px;width:17px;height:2px;background:#b0c6e4;"></div><svg style="left:2438px;top:266.2px" width="32" height="32" viewBox="0 0 32 32" fill="none" stroke="#000" stroke-width="4"><rect x="2" y="2" width="20" height="20"/><rect x="10" y="10" width="20" height="20"/><rect x="12" y="12" width="8" height="8" fill="#000" stroke="none"/><rect x="14" y="14" width="4" height="4" fill="#e0e0e0" stroke="none"/></svg><div style="left:2418px;top:313px;width:17px;height:2px;background:#b0c6e4;"></div><svg style="left:2438px;top:298.2px" width="32" height="32" viewBox="0 0 32 32" fill="none" stroke="#000" stroke-width="4"><rect x="2" y="2" width="20" height="20"/><rect x="10" y="10" width="20" height="20"/><rect x="12" y="12" width="8" height="8" fill="#000" stroke="none"/><rect x="14" y="14" width="4" height="4" fill="#e0e0e0" stroke="none"/></svg><div style="left:2418px;top:345px;width:17px;height:2px;background:#b0c6e4;"></div><svg style="left:2438px;top:330.2px" width="32" height="32" viewBox="0 0 32 32" fill="none" stroke="#000" stroke-width="4"><rect x="2" y="2" width="20" height="20"/><rect x="10" y="10" width="20" height="20"/><rect x="12" y="12" width="8" height="8" fill="#000" stroke="none"/><rect x="14" y="14" width="4" height="4" fill="#e0e0e0" stroke="none"/></svg><div style="left:2418px;top:377px;width:17px;height:2px;background:#b0c6e4;"></div><svg style="left:2438px;top:362.2px" width="32" height="32" viewBox="0 0 32 32" fill="none" stroke="#000" stroke-width="4"><rect x="2" y="2" width="20" height="20"/><rect x="10" y="10" width="20" height="20"/><rect x="12" y="12" width="8" height="8" fill="#000" stroke="none"/><rect x="14" y="14" width="4" height="4" fill="#e0e0e0" stroke="none"/></svg><div style="left:2418px;top:409px;width:17px;height:2px;background:#b0c6e4;"></div><svg style="left:2438px;top:394.2px" width="32" height="32" viewBox="0 0 32 32" fill="none" stroke="#000" stroke-width="4"><rect x="2" y="2" width="20" height="20"/><rect x="10" y="10" width="20" height="20"/><rect x="12" y="12" width="8" height="8" fill="#000" stroke="none"/><rect x="14" y="14" width="4" height="4" fill="#e0e0e0" stroke="none"/></svg><div style="left:2418px;top:441px;width:17px;height:2px;background:#b0c6e4;"></div><svg style="left:2438px;top:426.2px" width="32" height="32" viewBox="0 0 32 32" fill="none" stroke="#000" stroke-width="4"><rect x="2" y="2" width="20" height="20"/><rect x="10" y="10" width="20" height="20"/><rect x="12" y="12" width="8" height="8" fill="#000" stroke="none"/><rect x="14" y="14" width="4" height="4" fill="#e0e0e0" stroke="none"/></svg><div style="left:2418px;top:473px;width:17px;height:2px;background:#b0c6e4;"></div><svg style="left:2438px;top:458.2px" width="32" height="32" viewBox="0 0 32 32" fill="none" stroke="#000" stroke-width="4"><rect x="2" y="2" width="20" height="20"/><rect x="10" y="10" width="20" height="20"/><rect x="12" y="12" width="8" height="8" fill="#000" stroke="none"/><rect x="14" y="14" width="4" height="4" fill="#e0e0e0" stroke="none"/></svg><div style="left:2418px;top:505px;width:17px;height:2px;background:#b0c6e4;"></div><svg style="left:2438px;top:490.2px" width="32" height="32" viewBox="0 0 32 32" fill="none" stroke="#000" stroke-width="4"><rect x="2" y="2" width="20" height="20"/><rect x="10" y="10" width="20" height="20"/><rect x="12" y="12" width="8" height="8" fill="#000" stroke="none"/><rect x="14" y="14" width="4" height="4" fill="#e0e0e0" stroke="none"/></svg><div style="left:2418px;top:537px;width:17px;height:2px;background:#b0c6e4;"></div><svg style="left:2438px;top:522.2px" width="32" height="32" viewBox="0 0 32 32" fill="none" stroke="#000" stroke-width="4"><rect x="2" y="2" width="20" height="20"/><rect x="10" y="10" width="20" height="20"/><rect x="12" y="12" width="8" height="8" fill="#000" stroke="none"/><rect x="14" y="14" width="4" height="4" fill="#e0e0e0" stroke="none"/></svg><div style="left:2418px;top:569px;width:17px;height:2px;background:#b0c6e4;"></div><svg style="left:2438px;top:554.2px" width="32" height="32" viewBox="0 0 32 32" fill="none" stroke="#000" stroke-width="4"><rect x="2" y="2" width="20" height="20"/><rect x="10" y="10" width="20" height="20"/><rect x="12" y="12" width="8" height="8" fill="#000" stroke="none"/><rect x="14" y="14" width="4" height="4" fill="#e0e0e0" stroke="none"/></svg><div style="left:2418px;top:601px;width:17px;height:2px;background:#b0c6e4;"></div><svg style="left:2438px;top:586.2px" width="32" height="32" viewBox="0 0 32 32" fill="none" stroke="#000" stroke-width="4"><rect x="2" y="2" width="20" height="20"/><rect x="10" y="10" width="20" height="20"/><rect x="12" y="12" width="8" height="8" fill="#000" stroke="none"/><rect x="14" y="14" width="4" height="4" fill="#e0e0e0" stroke="none"/></svg><div style="left:2418px;top:633px;width:17px;height:2px;background:#b0c6e4;"></div><svg style="left:2438px;top:618.2px" width="32" height="32" viewBox="0 0 32 32" fill="none" stroke="#000" stroke-width="4"><rect x="2" y="2" width="20" height="20"/><rect x="10" y="10" width="20" height="20"/><rect x="12" y="12" width="8" height="8" fill="#000" stroke="none"/><rect x="14" y="14" width="4" height="4" fill="#e0e0e0" stroke="none"/></svg><div style="left:2418px;top:665px;width:17px;height:2px;background:#b0c6e4;"></div><svg style="left:2438px;top:650.2px" width="32" height="32" viewBox="0 0 32 32" fill="none" stroke="#000" stroke-width="4"><rect x="2" y="2" width="20" height="20"/><rect x="10" y="10" width="20" height="20"/><rect x="12" y="12" width="8" height="8" fill="#000" stroke="none"/><rect x="14" y="14" width="4" height="4" fill="#e0e0e0" stroke="none"/></svg><div style="left:2418px;top:697px;width:17px;height:2px;background:#b0c6e4;"></div><svg style="left:2438px;top:682.2px" width="32" height="32" viewBox="0 0 32 32" fill="none" stroke="#000" stroke-width="4"><rect x="2" y="2" width="20" height="20"/><rect x="10" y="10" width="20" height="20"/><rect x="12" y="12" width="8" height="8" fill="#000" stroke="none"/><rect x="14" y="14" width="4" height="4" fill="#e0e0e0" stroke="none"/></svg><div style="left:2418px;top:729px;width:17px;height:2px;background:#b0c6e4;"></div><svg style="left:2438px;top:714.2px" width="32" height="32" viewBox="0 0 32 32" fill="none" stroke="#000" stroke-width="4"><rect x="2" y="2" width="20" height="20"/><rect x="10" y="10" width="20" height="20"/><rect x="12" y="12" width="8" height="8" fill="#000" stroke="none"/><rect x="14" y="14" width="4" height="4" fill="#e0e0e0" stroke="none"/></svg><div style="left:2394px;top:896px;width:781.5px;height:560px;background:#6a84c6;"></div><div style="left:2421px;top:898px;width:727.5px;height:2px;background:#2b3350;"></div><div style="left:2421px;top:900px;width:727.5px;height:2px;background:#b9d0ef;"></div><div style="left:2421px;top:1450px;width:727.5px;height:2px;background:#2b3350;"></div><div style="left:2421px;top:1452px;width:727.5px;height:2px;background:#b9d0ef;"></div><div style="left:2396px;top:923px;width:2px;height:506px;background:#2b3350;"></div><div style="left:2398px;top:923px;width:2px;height:506px;background:#b9d0ef;"></div><div style="left:3169.5px;top:923px;width:2px;height:506px;background:#2b3350;"></div><div style="left:3171.5px;top:923px;width:2px;height:506px;background:#b9d0ef;"></div><div style="left:2402px;top:904px;width:765.5px;height:544px;background:#eeeeee;"></div><div style="left:2402px;top:904px;width:765.5px;height:41px;background:linear-gradient(#fdfdfe,#e4ebf6 45%,#c8d6ee);"></div><div style="left:2402px;top:945px;width:765.5px;height:2px;background:#6a84c6;"></div><div class="dots" style="left:2828px;top:912px;width:328px;height:31px;"></div><div class="tf" style="left:2402.5px;top:952px;width:481.5px;height:34px;border-left-width:0;"></div><svg style="left:2410px;top:957px" width="36" height="26" viewBox="0 0 36 26" fill="none"><circle cx="10" cy="10" r="8" stroke="#adadad" stroke-width="3.600"/><path d="M16 16L22.500 23" stroke="#adadad" stroke-width="4"/><path d="M24.500 10.500H34L29.200 15.800Z" fill="#b3b3b3"/></svg><div class="cb" style="left:2959px;top:958px;width:26px;height:26px;"></div><div class="tf" style="left:3098px;top:951px;width:41px;height:38.6px;"></div><div class="sbb" style="left:3137px;top:950px;width:30px;height:20.5px;"></div><div class="sbb" style="left:3137px;top:970.5px;width:30px;height:20.5px;"></div><svg style="left:3145px;top:956.9px" width="14" height="7.2" viewBox="3145.0 956.9 14 7.2"><polygon points="3148.5,962.3 3155.5,962.3 3152.0,958.7" fill="#6d7b90"/></svg><svg style="left:3145px;top:976.9px" width="14" height="7.2" viewBox="3145.0 976.9 14 7.2"><polygon points="3148.5,978.7 3155.5,978.7 3152.0,982.3" fill="#6d7b90"/></svg><div style="left:2403px;top:1000px;width:762px;height:408px;box-sizing:border-box;border:1.5px solid #8a98ad;border-left-color:rgba(0,0,0,0);background:#eeeeee;"></div><div class="trk" style="left:3134.5px;top:1001px;width:29px;height:406px;"></div><div class="sbb" style="left:3134.5px;top:1001px;width:29px;height:30.5px;"></div><svg style="left:3132px;top:1008px" width="34" height="17.0" viewBox="3132.0 1008.0 34 17.0"><polygon points="3140.5,1020.75 3157.5,1020.75 3149.0,1012.25" fill="#222"/></svg><div class="sbb" style="left:3134.5px;top:1376.5px;width:29px;height:30.5px;"></div><svg style="left:3132px;top:1383.5px" width="34" height="17.0" viewBox="3132.0 1383.5 34 17.0"><polygon points="3140.5,1387.75 3157.5,1387.75 3149.0,1396.25" fill="#222"/></svg><div class="thv" style="left:3134.5px;top:1031.7px;width:29px;height:335.3px;"></div><div style="left:3141.5px;top:1194.35px;width:15px;height:2px;background:#5b7fcb;"></div><div style="left:3141.5px;top:1198.35px;width:15px;height:2px;background:#5b7fcb;"></div><div style="left:3141.5px;top:1202.35px;width:15px;height:2px;background:#5b7fcb;"></div><div style="left:2450.7px;top:1030.6px;width:2px;height:16px;background:#b0c6e4;"></div><div style="left:2482.4px;top:1062.6px;width:2px;height:16px;background:#b0c6e4;"></div><div style="left:2514.5px;top:1094.6px;width:2px;height:272px;background:#b0c6e4;"></div><div style="left:2546.5px;top:1126.6px;width:2px;height:84px;background:#b0c6e4;"></div><div style="left:2546.5px;top:1254.6px;width:2px;height:20px;background:#b0c6e4;"></div><div style="left:2546.5px;top:1318.6px;width:2px;height:20px;background:#b0c6e4;"></div><div style="left:2546.5px;top:1382.6px;width:2px;height:20px;background:#b0c6e4;"></div><svg style="left:2411.7px;top:1006.6px" width="26" height="26" viewBox="0 0 26 26" fill="none"><path d="M14 11H26" stroke="#b0c6e4" stroke-width="1.600"/><circle cx="8" cy="7.700" r="4" stroke="#6a84c6" stroke-width="3.600" fill="#fbfcfe"/><path d="M8 11V22.800" stroke="#6a84c6" stroke-width="4"/></svg><svg style="left:2440px;top:1004.0px;color:#000;fill:#000;" width="28" height="28"><use href="#fus"/></svg><svg style="left:2443.7px;top:1038.6px" width="26" height="26" viewBox="0 0 26 26" fill="none"><path d="M14 11H26" stroke="#b0c6e4" stroke-width="1.600"/><circle cx="8" cy="7.700" r="4" stroke="#6a84c6" stroke-width="3.600" fill="#fbfcfe"/><path d="M8 11V22.800" stroke="#6a84c6" stroke-width="4"/></svg><svg style="left:2472px;top:1034.1999999999998px;color:#000;fill:#000;" width="28" height="32"><use href="#hex"/></svg><svg style="left:2475.7px;top:1070.6px" width="26" height="26" viewBox="0 0 26 26" fill="none"><path d="M14 11H26" stroke="#b0c6e4" stroke-width="1.600"/><circle cx="8" cy="7.700" r="4" stroke="#6a84c6" stroke-width="3.600" fill="#fbfcfe"/><path d="M8 11V22.800" stroke="#6a84c6" stroke-width="4"/></svg><svg style="left:2502px;top:1067.8999999999999px;color:#000;fill:#000;" width="32" height="28"><use href="#legos"/></svg><svg style="left:2507.7px;top:1102.6px" width="26" height="26" viewBox="0 0 26 26" fill="none"><path d="M14 11H26" stroke="#b0c6e4" stroke-width="1.600"/><circle cx="8" cy="7.700" r="4" stroke="#6a84c6" stroke-width="3.600" fill="#fbfcfe"/><path d="M8 11V22.800" stroke="#6a84c6" stroke-width="4"/></svg><svg style="left:2534px;top:1099.8999999999999px;color:#000;fill:#000;" width="32" height="28"><use href="#legos"/></svg><div style="left:2547.5px;top:1143.9px;width:16.5px;height:2px;background:#b0c6e4;"></div><svg style="left:2566px;top:1131.8999999999999px;color:#000;fill:#000;" width="32" height="28"><use href="#legos"/></svg><div style="left:2547.5px;top:1175.9px;width:16.5px;height:2px;background:#b0c6e4;"></div><svg style="left:2566px;top:1163.8999999999999px;color:#000;fill:#000;" width="32" height="28"><use href="#legos"/></svg><div style="left:2547.5px;top:1207.9px;width:16.5px;height:2px;background:#b0c6e4;"></div><svg style="left:2566px;top:1195.8999999999999px;color:#000;fill:#000;" width="32" height="28"><use href="#legos"/></svg><svg style="left:2507.7px;top:1230.6px" width="26" height="26" viewBox="0 0 26 26" fill="none"><path d="M14 11H26" stroke="#b0c6e4" stroke-width="1.600"/><circle cx="8" cy="7.700" r="4" stroke="#6a84c6" stroke-width="3.600" fill="#fbfcfe"/><path d="M8 11V22.800" stroke="#6a84c6" stroke-width="4"/></svg><svg style="left:2534px;top:1227.8999999999999px;color:#000;fill:#000;" width="32" height="28"><use href="#legos"/></svg><div style="left:2547.5px;top:1271.9px;width:16.5px;height:2px;background:#b0c6e4;"></div><svg style="left:2566px;top:1259.8999999999999px;color:#000;fill:#000;" width="32" height="28"><use href="#legos"/></svg><svg style="left:2507.7px;top:1294.6px" width="26" height="26" viewBox="0 0 26 26" fill="none"><path d="M14 11H26" stroke="#b0c6e4" stroke-width="1.600"/><circle cx="8" cy="7.700" r="4" stroke="#6a84c6" stroke-width="3.600" fill="#fbfcfe"/><path d="M8 11V22.800" stroke="#6a84c6" stroke-width="4"/></svg><svg style="left:2534px;top:1291.8999999999999px;color:#000;fill:#000;" width="32" height="28"><use href="#legos"/></svg><div style="left:2547.5px;top:1335.9px;width:16.5px;height:2px;background:#b0c6e4;"></div><svg style="left:2566px;top:1323.8999999999999px;color:#000;fill:#000;" width="32" height="28"><use href="#legos"/></svg><svg style="left:2507.7px;top:1358.6px" width="26" height="26" viewBox="0 0 26 26" fill="none"><path d="M14 11H26" stroke="#b0c6e4" stroke-width="1.600"/><circle cx="8" cy="7.700" r="4" stroke="#6a84c6" stroke-width="3.600" fill="#fbfcfe"/><path d="M8 11V22.800" stroke="#6a84c6" stroke-width="4"/></svg><svg style="left:2534px;top:1355.8999999999999px;color:#000;fill:#000;" width="32" height="28"><use href="#legos"/></svg><div style="left:2547.5px;top:1399.9px;width:16.5px;height:2px;background:#b0c6e4;"></div><svg style="left:2566px;top:1387.8999999999999px;color:#000;fill:#000;clip-path:inset(0 0 10.600px 0);" width="32" height="28"><use href="#legos"/></svg><div style="left:2394px;top:1472px;width:781.5px;height:368px;background:#7b8ba1;"></div><div style="left:2421px;top:1474px;width:727.5px;height:2px;background:#2b2b2e;"></div><div style="left:2421px;top:1476px;width:727.5px;height:2px;background:#b9d0ef;"></div><div style="left:2421px;top:1834px;width:727.5px;height:2px;background:#2b2b2e;"></div><div style="left:2421px;top:1836px;width:727.5px;height:2px;background:#b9d0ef;"></div><div style="left:2396px;top:1499px;width:2px;height:314px;background:#2b2b2e;"></div><div style="left:2398px;top:1499px;width:2px;height:314px;background:#b9d0ef;"></div><div style="left:3169.5px;top:1499px;width:2px;height:314px;background:#2b2b2e;"></div><div style="left:3171.5px;top:1499px;width:2px;height:314px;background:#b9d0ef;"></div><div style="left:2402px;top:1480px;width:765.5px;height:352px;background:#eeeeee;"></div><div style="left:2402px;top:1480px;width:765.5px;height:41px;background:#eeeeee;"></div><div style="left:2402px;top:1521px;width:765.5px;height:2px;background:#7b8ba1;"></div><div class="dots" style="left:2614.5px;top:1488px;width:504px;height:31px;"></div><div style="left:3129.8px;top:1486.6px;width:28.5px;height:27px;box-sizing:border-box;border:2px solid #5d6f93;background:linear-gradient(#fff,#d8e0ee);box-shadow:inset 0 0 0 2px #a7b9e0;"></div><svg style="left:3129.8px;top:1486.6px" width="28.5" height="27" viewBox="0 0 28.5 27"><path d="M6 5.500L22.500 21.500M22.500 5.500L6 21.500" stroke="#2b3c5c" stroke-width="2.600"/></svg><div class="tf" style="left:2402.5px;top:1528px;width:481.5px;height:34px;border-left-width:0;"></div><svg style="left:2410px;top:1533px" width="36" height="26" viewBox="0 0 36 26" fill="none"><circle cx="10" cy="10" r="8" stroke="#adadad" stroke-width="3.600"/><path d="M16 16L22.500 23" stroke="#adadad" stroke-width="4"/><path d="M24.500 10.500H34L29.200 15.800Z" fill="#b3b3b3"/></svg><div class="cb" style="left:2959px;top:1534px;width:26px;height:26px;"></div><div class="tf" style="left:3098px;top:1527px;width:41px;height:38.6px;"></div><div class="sbb" style="left:3137px;top:1526px;width:30px;height:20.5px;"></div><div class="sbb" style="left:3137px;top:1546.5px;width:30px;height:20.5px;"></div><svg style="left:3145px;top:1532.9px" width="14" height="7.2" viewBox="3145.0 1532.9 14 7.2"><polygon points="3148.5,1538.3 3155.5,1538.3 3152.0,1534.7" fill="#6d7b90"/></svg><svg style="left:3145px;top:1552.9px" width="14" height="7.2" viewBox="3145.0 1552.9 14 7.2"><polygon points="3148.5,1554.7 3155.5,1554.7 3152.0,1558.3" fill="#6d7b90"/></svg><div style="left:2403px;top:1576.5px;width:762px;height:215.5px;box-sizing:border-box;border:1.5px solid #8a98ad;border-left-color:rgba(0,0,0,0);background:#eeeeee;"></div><div style="left:2417px;top:1592.3px;width:2px;height:98px;background:#b0c6e4;"></div><div style="left:2418px;top:1592.3px;width:17px;height:2px;background:#b0c6e4;"></div><svg style="left:2442px;top:1578px;color:#000;fill:#000;fill:#1a1a1a;" width="24" height="32"><use href="#drop"/></svg><div style="left:2418px;top:1624.3px;width:17px;height:2px;background:#b0c6e4;"></div><svg style="left:2442px;top:1610px;color:#000;fill:#000;fill:#5b8cf0;" width="24" height="32"><use href="#drop"/></svg><div style="left:2418px;top:1656.3px;width:17px;height:2px;background:#b0c6e4;"></div><svg style="left:2442px;top:1642px;color:#000;fill:#000;fill:#e8524e;" width="24" height="32"><use href="#drop"/></svg><div style="left:2418px;top:1688.3px;width:17px;height:2px;background:#b0c6e4;"></div><svg style="left:2442px;top:1674px;color:#000;fill:#000;fill:#e6ebfa;" width="24" height="32"><use href="#drop"/></svg><div style="left:3176px;top:70.1px;width:664px;height:2100px;background:#eeeeee;"></div><div style="left:3184px;top:72px;width:600px;height:54px;background:#fff;"></div><div style="left:3184px;top:74px;width:600px;height:45.6px;background:linear-gradient(#ffffff,#f6f6f6 40%,#e4e4e4);"></div><svg style="left:3686px;top:83px" width="34" height="30" viewBox="0 0 34 30" fill="none" stroke="#4a4a4a"><path d="M11.500 7.500V2.500H31.500V20.500H26.500" stroke-width="3" stroke="#5a5a5a"/><rect x="2.500" y="10.500" width="21.500" height="17.500" stroke-width="3.600"/><rect x="15" y="14" width="4" height="4" fill="#4a4a4a" stroke="none"/></svg><svg style="left:3735px;top:83px" width="26" height="30" viewBox="0 0 26 30" fill="none" stroke="#4a4a4a" stroke-width="3.400"><rect x="7.500" y="2" width="10" height="13"/><path d="M1 17H25M12.500 17V29"/></svg><svg style="left:3732px;top:16px" width="36" height="34" viewBox="0 0 36 34" fill="none"><rect x="8" y="1.500" width="20" height="11" fill="#f6f6f6" stroke="#a8a8a8" stroke-width="1.500"/><rect x="2" y="11" width="32" height="13" rx="2" fill="#cfcfcf" stroke="#9a9a9a" stroke-width="1.500"/><rect x="4" y="17.500" width="28" height="4" fill="#444"/><rect x="8" y="21.500" width="20" height="10.500" fill="#f3f3f3" stroke="#a0a0a0" stroke-width="1.500"/><path d="M11 26H25M11 29H25" stroke="#bdbdbd" stroke-width="1.400"/></svg><div style="left:3774px;top:4px;width:1.5px;height:60px;background:#5c7fc0;"></div><svg style="left:3785px;top:25px" width="30" height="16" viewBox="3785 25 30 16"><polygon points="3792.5,29.0 3807.5,29.0 3800,37.0" fill="#7d8cab"/></svg><div style="left:3786.5px;top:73.5px;width:45px;height:305px;box-sizing:border-box;border:2px solid #7b8ba1;border-right:none;background:#eeeeee;"></div><svg style="left:3797px;top:79px" width="28" height="33" viewBox="0 0 28 33" fill="none"><rect x="1" y="1" width="26" height="31" fill="#f4f4f4" stroke="#b0b6c0" stroke-width="1.600"/><rect x="5.500" y="5" width="13" height="11" fill="#3d7fb0"/><rect x="5.500" y="5" width="13" height="5" fill="#5a93c8"/><rect x="5.500" y="11" width="13" height="5" fill="#3f9a76"/><path d="M7.500 19V27M11.500 19V27M15.500 19V27" stroke="#9aa" stroke-width="1.600"/><path d="M5.500 28.500H19" stroke="#5aa080" stroke-width="1.600"/><path d="M22.500 6V27" stroke="#c5c8d0" stroke-width="2.500"/></svg><div class="tf" style="left:3466px;top:166px;width:295px;height:34.5px;"></div><div style="left:3466.5px;top:215px;width:39px;height:38.5px;box-sizing:border-box;border:2px dotted #4d4d4d;"></div><div class="btn" style="left:3518px;top:214.5px;width:39.5px;height:39px;"></div><div class="btn" style="left:3570px;top:214.5px;width:39.5px;height:39px;"></div><div class="btn" style="left:3622px;top:214.5px;width:39.5px;height:39px;"></div><svg style="left:3518px;top:214.500px" width="40" height="39" viewBox="0 0 40 39" fill="none"><circle cx="22" cy="16" r="9.500" fill="#e8ecfa" stroke="#5560c8" stroke-width="2.600"/><path d="M15 23L6 32" stroke="#d23a2a" stroke-width="4.400" stroke-linecap="round"/><path d="M14.500 23.500l2 2" stroke="#eee" stroke-width="1.500"/></svg><svg style="left:3570px;top:214.500px" width="40" height="39" viewBox="0 0 40 39" fill="none"><path d="M7 8C14 13 24 22 32 33M31 7C23 13 14 22 9 30" stroke="#5a1210" stroke-width="4.200" stroke-linecap="round"/></svg><svg style="left:3622px;top:214.500px" width="40" height="39" viewBox="0 0 40 39" fill="none"><path d="M5 5H15L20 10V23H5Z" fill="#dfe8fa" stroke="#6f8fd0" stroke-width="1.600"/><path d="M7.500 11H14M7.500 14.500H17M7.500 18H17" stroke="#5c86d6" stroke-width="1.500"/><path d="M18 14H28L33.500 19.500V32H18Z" fill="#eaf0fc" stroke="#2e56b8" stroke-width="1.800"/><path d="M21 21H27M21 24.500H30.500M21 28H30.500" stroke="#2e56b8" stroke-width="1.800"/></svg><div class="tf" style="left:3466px;top:264px;width:295px;height:100.7px;"></div><div class="cb" style="left:3481px;top:377.4px;width:26px;height:26px;"></div><div style="left:3466px;top:424px;width:296.5px;height:36.5px;box-sizing:border-box;border:2px solid #b3c7e3;"></div><div class="tf" style="left:3466px;top:484.7px;width:249.5px;height:34px;"></div><div class="btn" style="left:3724px;top:484.7px;width:39px;height:37.5px;"></div><svg style="left:3724px;top:484.700px" width="39" height="38" viewBox="0 0 39 38" fill="none"><path d="M13.500 26.500L30 10" stroke="#2e2e2e" stroke-width="8.500" stroke-dasharray="2 0.900"/><rect x="8" y="27.500" width="4" height="4" fill="#111"/></svg><div style="left:3466px;top:532.4px;width:258px;height:38.2px;box-sizing:border-box;border:2px solid #8492a8;background:#eeeeee;box-shadow:inset 2px 2px 0 #c5d4ea,inset -1px -2px 0 #d0dcf0,1px 2px 0 rgba(255,255,255,.9);"></div><div class="btn" style="left:3723px;top:532.4px;width:40px;height:38.2px;"></div><svg style="left:3725.5px;top:543.5px" width="36" height="19.0" viewBox="3725.5 543.5 36 19.0"><polygon points="3734.5,548.25 3752.5,548.25 3743.5,557.75" fill="#222"/></svg><div class="sec" style="left:3194.5px;top:594px;width:544px;height:43.6px;"></div><div style="left:3194.5px;top:596px;width:3.2px;height:41.6px;background:#8fa4c4;border-radius:3px 0 0 0;"></div><svg style="left:3697.500px;top:601px" width="29" height="29" viewBox="0 0 29 29" fill="none"><circle cx="14.500" cy="14.500" r="13.800" fill="#959fb0" stroke="#9aa5b6" stroke-width="1"/><path d="M8 13.500L14.500 7L21 13.500M8 21L14.500 14.500L21 21" stroke="#fff" stroke-width="2.200"/></svg><div style="left:3194.5px;top:637.6px;width:544px;height:450.9px;box-sizing:border-box;border:1.5px solid #b5c7e0;border-top:none;"></div><div class="btn" style="left:3216px;top:658px;width:241px;height:48px;"></div><div class="cbd" style="left:3217px;top:717px;width:26px;height:26px;"></div><svg style="left:3217px;top:717px" width="26" height="26" viewBox="0 0 26 26"><polygon points="7,10.8 10.600,11.200 10.900,14.700 21,5.900 20.200,10.300 10.900,20.500 7.400,20.500" fill="#7b8ba1"/></svg><div style="left:3220px;top:788.4px;width:493.7px;height:67.1px;box-sizing:border-box;border:2px solid #b3c6e2;"></div><div style="left:3228px;top:786.4px;width:122.5px;height:6px;background:#eeeeee;"></div><div style="left:3220px;top:894.6px;width:493.7px;height:67.1px;box-sizing:border-box;border:2px solid #b3c6e2;"></div><div style="left:3228px;top:892.6px;width:156px;height:6px;background:#eeeeee;"></div><div style="left:3220px;top:1000.5px;width:493.7px;height:67px;box-sizing:border-box;border:2px solid #b3c6e2;"></div><div style="left:3228px;top:998.5px;width:202px;height:6px;background:#eeeeee;"></div><div class="sec" style="left:3194.5px;top:1120px;width:544px;height:43.6px;"></div><div style="left:3194.5px;top:1122px;width:3.2px;height:41.6px;background:#8fa4c4;border-radius:3px 0 0 0;"></div><svg style="left:3697.500px;top:1127px" width="29" height="29" viewBox="0 0 29 29" fill="none"><circle cx="14.500" cy="14.500" r="13.800" fill="#959fb0" stroke="#9aa5b6" stroke-width="1"/><path d="M8 13.500L14.500 7L21 13.500M8 21L14.500 14.500L21 21" stroke="#fff" stroke-width="2.200"/></svg><div style="left:3194.5px;top:1163.6px;width:544px;height:442.9px;box-sizing:border-box;border:1.5px solid #b5c7e0;border-top:none;"></div><div class="cb" style="left:3217px;top:1193.5px;width:26px;height:26px;"></div><svg style="left:3217px;top:1193.5px" width="26" height="26" viewBox="0 0 26 26"><polygon points="7,10.8 10.600,11.200 10.900,14.700 21,5.900 20.200,10.300 10.900,20.500 7.400,20.500" fill="#222"/></svg><div class="cb" style="left:3217px;top:1239.5px;width:26px;height:26px;"></div><div class="cbd" style="left:3217px;top:1285.5px;width:26px;height:26px;"></div><div class="cb" style="left:3217px;top:1331.5px;width:26px;height:26px;"></div><svg style="left:3217px;top:1331.5px" width="26" height="26" viewBox="0 0 26 26"><polygon points="7,10.8 10.600,11.200 10.900,14.700 21,5.900 20.200,10.300 10.900,20.500 7.400,20.500" fill="#222"/></svg><div class="cb" style="left:3217px;top:1377.5px;width:26px;height:26px;"></div><svg style="left:3217px;top:1377.5px" width="26" height="26" viewBox="0 0 26 26"><polygon points="7,10.8 10.600,11.200 10.900,14.700 21,5.900 20.200,10.300 10.900,20.500 7.400,20.500" fill="#222"/></svg><div class="cb" style="left:3217px;top:1423.5px;width:26px;height:26px;"></div><div style="left:3216px;top:1536.6px;width:462px;height:37.8px;box-sizing:border-box;border:2px solid #8492a8;background:#eeeeee;box-shadow:inset 2px 2px 0 #c5d4ea,inset -1px -2px 0 #d0dcf0,1px 2px 0 rgba(255,255,255,.9);"></div><div class="btn" style="left:3677px;top:1536.6px;width:40px;height:37.8px;"></div><svg style="left:3679.5px;top:1547.5px" width="36" height="19.0" viewBox="3679.5 1547.5 36 19.0"><polygon points="3688.5,1552.25 3706.5,1552.25 3697.5,1561.75" fill="#222"/></svg><div class="sec" style="left:3194.5px;top:1638px;width:544px;height:43.6px;"></div><div style="left:3194.5px;top:1640px;width:3.2px;height:41.6px;background:#8fa4c4;border-radius:3px 0 0 0;"></div><svg style="left:3697.500px;top:1645px" width="29" height="29" viewBox="0 0 29 29" fill="none"><circle cx="14.500" cy="14.500" r="13.800" fill="#959fb0" stroke="#9aa5b6" stroke-width="1"/><path d="M8 13.500L14.500 7L21 13.500M8 21L14.500 14.500L21 21" stroke="#fff" stroke-width="2.200"/></svg><div style="left:3194.5px;top:1681.6px;width:544px;height:432.9px;box-sizing:border-box;border:1.5px solid #b5c7e0;border-top:none;"></div><div class="cb" style="left:3223px;top:1711.7px;width:26px;height:26px;"></div><div class="cb" style="left:3223px;top:1757.7px;width:26px;height:26px;"></div><div class="cb" style="left:3223px;top:1803.7px;width:26px;height:26px;"></div><div class="cb" style="left:3223px;top:1849.7px;width:26px;height:26px;"></div><div class="cb" style="left:3223px;top:1895.7px;width:26px;height:26px;"></div><div class="cb" style="left:3223px;top:1941.7px;width:26px;height:26px;"></div><div class="cb" style="left:3223px;top:1987.7px;width:26px;height:26px;"></div><div style="left:3216px;top:2034px;width:502px;height:1.6px;background:#7e96c8;"></div><div style="left:3310px;top:2048px;width:212px;height:48.6px;box-sizing:border-box;border:2px solid #8492a8;background:#eeeeee;box-shadow:inset 2px 2px 0 #c5d4ea,inset -1px -2px 0 #d0dcf0,1px 2px 0 rgba(255,255,255,.9);"></div><div class="btn" style="left:3521px;top:2048px;width:40px;height:48.6px;"></div><svg style="left:3523.5px;top:2064.3px" width="36" height="19.0" viewBox="3523.5 2064.3 36 19.0"><polygon points="3532.5,2069.05 3550.5,2069.05 3541.5,2078.55" fill="#222"/></svg><div class="btn" style="left:3570px;top:2048px;width:147px;height:48.6px;"></div><div class="sec" style="left:3194.5px;top:2146px;width:544px;height:43.6px;"></div><div style="left:3194.5px;top:2148px;width:3.2px;height:41.6px;background:#8fa4c4;border-radius:3px 0 0 0;"></div><svg style="left:3697.500px;top:2153px" width="29" height="29" viewBox="0 0 29 29" fill="none"><circle cx="14.500" cy="14.500" r="13.800" fill="#959fb0" stroke="#9aa5b6" stroke-width="1"/><path d="M8 13.500L14.500 7L21 13.500M8 21L14.500 14.500L21 21" stroke="#fff" stroke-width="2.200"/></svg><div class="trk" style="left:3740px;top:594px;width:31.5px;height:1570px;"></div><div style="left:3770.5px;top:594px;width:1.5px;height:1570px;background:#8a98ad;"></div><div class="sbb" style="left:3740px;top:594.5px;width:31px;height:29.5px;"></div><svg style="left:3738.5px;top:601px" width="34" height="17.0" viewBox="3738.5 601.0 34 17.0"><polygon points="3747.0,613.75 3764.0,613.75 3755.5,605.25" fill="#222"/></svg><div class="thv" style="left:3740.5px;top:623.4px;width:31px;height:1002px;"></div><div style="left:3748px;top:1120.5px;width:19.7px;height:2px;background:#5b7fcb;"></div><div style="left:3748px;top:1124.5px;width:19.7px;height:2px;background:#5b7fcb;"></div><div style="left:3748px;top:1128.5px;width:19.7px;height:2px;background:#5b7fcb;"></div><div class="t sb" style="left:1720.8px;top:136.49px;--l:-0.352px;">Product Family</div><div class="t sb" style="left:2109.2px;top:182.49px;--l:-0.634px;">Flat</div><div class="t sb" style="left:2207px;top:182.49px;--l:-1.12px;">Expand</div><div class="t s" style="left:2315.7px;top:182.49px;--l:-1.769px;color:#333;"><i>0</i></div><div class="t sb" style="right:1471.8px;top:261.79px;--l:1.07px;">0 / 4 items</div><div class="t s" style="left:1681px;top:230.49px;clip-path:inset(0 0 14.5px 0);">Jupiterr</div><div class="t sb" style="left:1720.8px;top:328.49px;--l:-0.391px;">Business Area</div><div class="t sb" style="left:2109.2px;top:374.49px;--l:-0.634px;">Flat</div><div class="t sb" style="left:2207px;top:374.49px;--l:-1.12px;">Expand</div><div class="t s" style="left:2315.7px;top:374.49px;--l:-1.769px;color:#333;"><i>0</i></div><div class="t sb" style="right:1471.8px;top:453.79px;--l:1.07px;">0 / 2 items</div><div class="t s" style="left:1681px;top:422.49px;clip-path:inset(0 0 14.5px 0);">Home</div><div class="t sb" style="left:1720.7px;top:520.99px;--l:-0.309px;">Product Specification Instance</div><div class="t sb" style="left:2109.2px;top:566.99px;--l:-0.634px;">Flat</div><div class="t sb" style="left:2207px;top:566.99px;--l:-1.12px;">Expand</div><div class="t s" style="left:2315.7px;top:566.99px;--l:-1.769px;color:#333;"><i>0</i></div><div class="t sb" style="right:1471.8px;top:1798.79px;--l:1.108px;">0 / 50 items</div><div class="t s" style="left:1681px;top:615.79px;--l:-0.633px;max-width:654.5px;overflow:hidden;">Jupiter Wardrobe JW<i>01</i>-<i>1</i></div><div class="t s" style="left:1681px;top:647.79px;--l:-0.601px;max-width:654.5px;overflow:hidden;">Jupiter Wardrobe JW<i>01</i>-<i>10</i></div><div class="t s" style="left:1681px;top:679.79px;--l:-0.533px;max-width:654.5px;overflow:hidden;">Jupiter Wardrobe JW<i>01</i>-<i>11</i></div><div class="t s" style="left:1681px;top:711.79px;--l:-0.569px;max-width:654.5px;overflow:hidden;">Jupiter Wardrobe JW<i>01</i>-<i>17</i> <i>200</i>x<i>100</i>x<i>130</i></div><div class="t s" style="left:1681px;top:743.79px;--l:-0.601px;max-width:654.5px;overflow:hidden;">Jupiter Wardrobe JW<i>01</i>-<i>19</i></div><div class="t s" style="left:1681px;top:775.79px;--l:-0.504px;max-width:654.5px;overflow:hidden;">Jupiter Wardrobe JW<i>01</i>-<i>2</i> <i>110</i>x<i>90</i>x<i>130</i></div><div class="t s" style="left:1681px;top:807.79px;--l:-0.601px;max-width:654.5px;overflow:hidden;">Jupiter Wardrobe JW<i>01</i>-<i>20</i></div><div class="t s" style="left:1681px;top:839.79px;--l:-0.561px;max-width:654.5px;overflow:hidden;">Jupiter Wardrobe JW<i>01</i>-<i>3</i> <i>120</i>x<i>90</i>x<i>130</i></div><div class="t s" style="left:1681px;top:871.79px;--l:-0.514px;max-width:654.5px;overflow:hidden;">Jupiter Wardrobe JW<i>01</i>-<i>4</i> <i>130</i>x<i>110</i>x<i>130</i></div><div class="t s" style="left:1681px;top:903.79px;--l:-0.569px;max-width:654.5px;overflow:hidden;">Jupiter Wardrobe JW<i>01</i>-<i>5</i> <i>130</i>x<i>120</i>x<i>130</i></div><div class="t s" style="left:1681px;top:935.79px;--l:-0.569px;max-width:654.5px;overflow:hidden;">Jupiter Wardrobe JW<i>01</i>-<i>6</i> <i>130</i>x<i>130</i>x<i>130</i></div><div class="t s" style="left:1681px;top:967.79px;--l:-0.561px;max-width:654.5px;overflow:hidden;">Jupiter Wardrobe JW<i>01</i>-<i>7</i> <i>140</i>x<i>90</i>x<i>130</i></div><div class="t s" style="left:1681px;top:999.79px;--l:-0.569px;max-width:654.5px;overflow:hidden;">Jupiter Wardrobe JW<i>01</i>-<i>9</i> <i>140</i>x<i>100</i>x<i>130</i></div><div class="t s" style="left:1681px;top:1031.79px;--l:-0.586px;max-width:654.5px;overflow:hidden;">Jupiter Wardrobe JW<i>01</i>HM-<i>1</i> <i>100</i>x<i>90</i>x<i>130</i></div><div class="t s" style="left:1681px;top:1063.79px;--l:-0.66px;max-width:654.5px;overflow:hidden;">Jupiter Wardrobe JW<i>01</i>HM-<i>2</i></div><div class="t s" style="left:1681px;top:1095.79px;--l:-0.586px;max-width:654.5px;overflow:hidden;">Jupiter Wardrobe JW<i>01</i>HM-<i>3</i> <i>120</i>x<i>90</i>x<i>130</i></div><div class="t s" style="left:1681px;top:1127.79px;--l:-0.539px;max-width:654.5px;overflow:hidden;">Jupiter Wardrobe JW<i>01</i>HM-<i>4</i> <i>130</i>x<i>110</i>x<i>130</i></div><div class="t s" style="left:1681px;top:1159.79px;--l:-0.591px;max-width:654.5px;overflow:hidden;">Jupiter Wardrobe JW<i>01</i>HM-<i>5</i> <i>130</i>x<i>120</i>x<i>130</i></div><div class="t s" style="left:1681px;top:1191.79px;--l:-0.591px;max-width:654.5px;overflow:hidden;">Jupiter Wardrobe JW<i>01</i>HM-<i>6</i> <i>130</i>x<i>130</i>x<i>130</i></div><div class="t s" style="left:1681px;top:1223.79px;--l:-0.494px;max-width:654.5px;overflow:hidden;">Jupiter Wardrobe JW<i>02</i>-<i>1</i> <i>170</i>x<i>110</i>x<i>130</i></div><div class="t s" style="left:1678px;top:1255.79px;--l:-0.434px;max-width:654.5px;overflow:hidden;">Marrz Cabinet  Frame, Black, <i>60</i>x<i>40</i>x<i>180</i> cm <em style="letter-spacing:-0.9px">(MCFW012-1)</em></div><div class="t s" style="left:1678px;top:1287.79px;--l:-0.402px;max-width:654.5px;overflow:hidden;">Marrz Cabinet  Frame, Black, <i>60</i>x<i>40</i>x<i>40</i> cm <em style="letter-spacing:-0.9px">(MCFW012-2)</em></div><div class="t s" style="left:1678px;top:1319.79px;--l:-0.402px;max-width:654.5px;overflow:hidden;">Marrz Cabinet  Frame, Black, <i>60</i>x<i>40</i>x<i>60</i> cm <em style="letter-spacing:-0.9px">(MCFW012-3)</em></div><div class="t s" style="left:1678px;top:1351.79px;--l:-0.434px;max-width:654.5px;overflow:hidden;">Marrz Cabinet  Frame, Black, <i>60</i>x<i>60</i>x<i>200</i> cm <em style="letter-spacing:-0.9px">(MCFW012-4)</em></div><div class="t s" style="left:1678px;top:1383.79px;--l:-0.399px;max-width:654.5px;overflow:hidden;">Marrz Cabinet  Frame, Red, <i>60</i>x<i>40</i>x<i>180</i> cm <em style="letter-spacing:-0.9px">(MCFW012-5)</em></div><div class="t s" style="left:1678px;top:1415.79px;--l:-0.39px;max-width:654.5px;overflow:hidden;">Marrz Cabinet  Frame, Red, <i>60</i>x<i>40</i>x<i>40</i> cm <em style="letter-spacing:-0.9px">(MCFW012-8)</em></div><div class="t s" style="left:1678px;top:1447.79px;--l:-0.39px;max-width:654.5px;overflow:hidden;">Marrz Cabinet  Frame, Red, <i>60</i>x<i>40</i>x<i>60</i> cm <em style="letter-spacing:-0.9px">(MCFW012-9)</em></div><div class="t s" style="left:1678px;top:1479.79px;--l:-0.399px;max-width:654.5px;overflow:hidden;">Marrz Cabinet  Frame, Red, <i>60</i>x<i>60</i>x<i>200</i> cm <em style="letter-spacing:-0.9px">(MCFW012-10)</em></div><div class="t s" style="left:1678px;top:1511.79px;--l:-0.448px;max-width:654.5px;overflow:hidden;">Marrz Cabinet  Frame, White, <i>60</i>x<i>40</i>x<i>180</i> cm <em style="letter-spacing:-0.9px">(MCFW012-11)</em></div><div class="t s" style="left:1678px;top:1543.79px;--l:-0.438px;max-width:654.5px;overflow:hidden;">Marrz Cabinet  Frame, White, <i>60</i>x<i>40</i>x<i>40</i> cm <em style="letter-spacing:-0.9px">(MCFW012-12)</em></div><div class="t s" style="left:1678px;top:1575.79px;--l:-0.438px;max-width:654.5px;overflow:hidden;">Marrz Cabinet  Frame, White, <i>60</i>x<i>40</i>x<i>60</i> cm <em style="letter-spacing:-0.9px">(MCFW012-13)</em></div><div class="t s" style="left:1678px;top:1607.79px;--l:-0.448px;max-width:654.5px;overflow:hidden;">Marrz Cabinet  Frame, White, <i>60</i>x<i>60</i>x<i>200</i> cm <em style="letter-spacing:-0.9px">(MCFW012-14)</em></div><div class="t s" style="left:1678px;top:1639.79px;--l:-0.413px;max-width:654.5px;overflow:hidden;">Marrz Cabinet Frame, Black, <i>60</i>x<i>60</i>x<i>140</i> cm <em style="letter-spacing:-0.9px">(MCFW012-16)</em></div><div class="t s" style="left:1678px;top:1671.79px;--l:-0.414px;max-width:654.5px;overflow:hidden;">Marrz Cabinet Frame, Blue, <i>60</i>x<i>40</i>x<i>180</i> cm <em style="letter-spacing:-0.9px">(MCFW012-6)</em></div><div class="t s" style="left:1678px;top:1703.79px;--l:-0.373px;max-width:654.5px;overflow:hidden;">Marrz Cabinet Frame, Red, <i>60</i>x<i>60</i>x<i>140</i> cm <em style="letter-spacing:-0.9px">(MCFW012-17)</em></div><div class="t s" style="left:1678px;top:1735.79px;--l:-0.412px;max-width:654.5px;overflow:hidden;clip-path:inset(0 0 17px 0);">Marrz Cabinet Frame, White, <i>60</i>x<i>60</i>x<i>140</i> cm <em style="letter-spacing:-0.9px">(MCFW012-15)</em></div><div class="t sb" style="left:2455px;top:136.49px;--l:-0.223px;">p13 – Base Product Part</div><div class="t sb" style="left:2907px;top:182.49px;--l:-0.634px;">Flat</div><div class="t sb" style="left:3004.8px;top:182.49px;--l:-1.12px;">Expand</div><div class="t s" style="left:3113.5px;top:182.49px;--l:-1.769px;color:#333;"><i>0</i></div><div class="t sb" style="right:674px;top:837.79px;--l:1.083px;">0 / 16 items</div><div class="t s" style="left:2479px;top:231.99px;--l:-0.716px;max-width:683px;overflow:hidden;">Back Panel <i>400</i>x<i>1600</i>x<i>400</i> mm (<i>10221162</i>)</div><div class="t s" style="left:2479px;top:263.99px;--l:-0.633px;max-width:683px;overflow:hidden;">Back Panel <i>400</i>x<i>1600</i>x<i>400</i> mm High Humidity (<i>10081445</i>)</div><div class="t s" style="left:2479px;top:295.99px;--l:-0.69px;max-width:683px;overflow:hidden;">Bottom Panel <i>400</i>x<i>800</i>x<i>400</i> mm (<i>10081483</i>)</div><div class="t s" style="left:2479px;top:327.99px;--l:-0.541px;max-width:683px;overflow:hidden;">Bottom Panel <i>400</i>x<i>800</i>x<i>400</i> mm High Humidity (<i>10221163</i>)</div><div class="t s" style="left:2479px;top:359.99px;--l:-0.626px;max-width:683px;overflow:hidden;">Cabinet Frame <i>600</i>x<i>1800</i>x<i>400</i> mm (<i>31061452</i>)</div><div class="t s" style="left:2479px;top:391.99px;--l:-0.535px;max-width:683px;overflow:hidden;">Cabinet Frame <i>600</i>x<i>1800</i>x<i>400</i> mm High Humidity (<i>31061453</i>)</div><div class="t s" style="left:2479px;top:423.99px;--l:-0.782px;max-width:683px;overflow:hidden;">Cabinet Light Source <i>0</i>.<i>84</i>kg (LY <i>002</i>)</div><div class="t s" style="left:2479px;top:455.99px;--l:-0.815px;max-width:683px;overflow:hidden;">Cabinet Light Source <i>1</i>.<i>12</i>kg (LG <i>005</i>)</div><div class="t s" style="left:2479px;top:487.99px;--l:-0.675px;max-width:683px;overflow:hidden;">Door Panel <i>400</i>x<i>800</i>x<i>400</i> mm (<i>10081484</i>)</div><div class="t s" style="left:2479px;top:519.99px;--l:-0.525px;max-width:683px;overflow:hidden;">Door Panel <i>400</i>x<i>800</i>x<i>400</i> mm High Humidity (<i>10221164</i>)</div><div class="t s" style="left:2479px;top:551.99px;--l:-0.717px;max-width:683px;overflow:hidden;">Front Panel <i>400</i>x<i>800</i>x<i>400</i> mm (<i>10221229</i>)</div><div class="t s" style="left:2479px;top:583.99px;--l:-0.566px;max-width:683px;overflow:hidden;">Front Panel <i>400</i>x<i>800</i>x<i>400</i> mm High Humidity (<i>10221166</i>)</div><div class="t s" style="left:2479px;top:615.99px;--l:-0.713px;max-width:683px;overflow:hidden;">Side Panel <i>400</i>x<i>600</i>x<i>400</i> mm (<i>10221159</i>)</div><div class="t s" style="left:2479px;top:647.99px;--l:-0.596px;max-width:683px;overflow:hidden;">Side Panel <i>400</i>x<i>800</i>x<i>400</i> mm High Humidity (<i>10221160</i>)</div><div class="t s" style="left:2479px;top:679.99px;--l:-0.514px;max-width:683px;overflow:hidden;">Top Panel <i>600</i>x<i>1800</i>x<i>400</i> mm (<i>10221155</i>)</div><div class="t s" style="left:2479px;top:711.99px;--l:-0.467px;max-width:683px;overflow:hidden;">Top Panel <i>600</i>x<i>1800</i>x<i>400</i> mm High Humidity (<i>10221011</i>)</div><div class="t sb" style="left:2455px;top:904.49px;--l:0.144px;">p1 – Product Unit Taxonomy</div><div class="t sb" style="left:2907px;top:950.49px;--l:-0.634px;">Flat</div><div class="t sb" style="left:3004.8px;top:950.49px;--l:-1.12px;">Expand</div><div class="t s" style="left:3113.5px;top:950.49px;--l:-1.769px;color:#333;"><i>5</i></div><div class="t sb" style="right:674px;top:1414.79px;--l:1.083px;">0 / 13 items</div><div class="t s" style="left:2479px;top:998.89px;--l:-0.735px;">Functional Unit</div><div class="t s" style="left:2510.5px;top:1030.89px;--l:-0.457px;">Product Unit</div><div class="t s" style="left:2542.5px;top:1062.89px;--l:-0.425px;">Product Concept</div><div class="t s" style="left:2574.5px;top:1094.89px;--l:-0.166px;">Jupiterr Wardrobe</div><div class="t s" style="left:2606.5px;top:1126.89px;--l:-0.39px;">Jupiterr Wardrobe Small</div><div class="t s" style="left:2606.5px;top:1158.89px;--l:-0.018px;">Jupiterr Wardrobe Tall</div><div class="t s" style="left:2606.5px;top:1190.89px;--l:-0.376px;">Jupiterr Wardrobe Wide</div><div class="t s" style="left:2574.5px;top:1222.89px;--l:-0.433px;">Marrz Cabinet Frame</div><div class="t s" style="left:2606.5px;top:1254.89px;--l:-0.911px;">Marrz Cabinet Frame (MCFW<i>012</i>)</div><div class="t s" style="left:2574.5px;top:1286.89px;--l:-0.611px;">Pluto Kitchen Light</div><div class="t s" style="left:2606.5px;top:1318.89px;--l:-0.868px;">Pluto Kitchen Light (PK<i>01</i>)</div><div class="t s" style="left:2574.5px;top:1350.89px;--l:-0.929px;">Venus Sink</div><div class="t s" style="left:2606.5px;top:1382.89px;--l:-1.255px;clip-path:inset(0 0 10.600px 0);">Venus Sink (VS<i>01</i>)</div><div class="t sb" style="left:2455px;top:1480.49px;--l:0.528px;">p20 – Color</div><div class="t sb" style="left:2907px;top:1526.49px;--l:-0.634px;">Flat</div><div class="t sb" style="left:3004.8px;top:1526.49px;--l:-1.12px;">Expand</div><div class="t s" style="left:3113.5px;top:1526.49px;--l:-1.769px;color:#333;"><i>0</i></div><div class="t sb" style="right:674px;top:1798.79px;--l:1.07px;">0 / 4 items</div><div class="t s" style="left:2479px;top:1575.29px;--l:-0.996px;">Black</div><div class="t s" style="left:2479px;top:1607.29px;--l:-1.762px;">Blue</div><div class="t s" style="left:2479px;top:1639.29px;--l:-1.768px;">Red</div><div class="t s" style="left:2479px;top:1671.29px;--l:-1.374px;">White</div><div class="t sb" style="left:3196.7px;top:78.59px;--l:0.295px;">Filter Component-Settings</div><div class="t sb" style="left:0px;top:-29.01px;--l:0.122px;left:3800.500px;top:107px;transform-origin:0 0;transform:rotate(90deg) translate(20px,-28px);">Context Navigator</div><div class="t sb" style="left:3204px;top:158.59px;--l:0.503px;">Title</div><div class="t s" style="left:3471px;top:164.99px;--l:-0.292px;color:#333;">Product Unit Taxonomy</div><div class="t sb" style="left:3204px;top:216.49px;--l:-0.738px;">Icon</div><div class="t sb" style="left:3204px;top:256.49px;--l:-0.039px;">Description</div><div class="t sb" style="left:3516.4px;top:370.39px;--l:-0.068px;">Show as Tooltip ...</div><div class="t sb" style="left:3204px;top:425.99px;--l:-0.468px;">Location</div><div class="t s" style="left:3480px;top:423.39px;--l:0.142px;color:#333;">(X=<i>9</i>, Y=<i>4</i>, W=<i>3</i>, H=<i>3</i>)</div><div class="t sb" style="left:3204px;top:482.69px;--l:-0.059px;">Visibility Expression</div><div class="t sb" style="left:3472.6px;top:530.99px;--l:0.214px;">Link to Component</div><div class="t s" style="left:3208px;top:596.99px;--l:-0.44px;color:#fff;">Content</div><div class="t sb" style="left:3251px;top:661.99px;--l:-0.254px;">Edit Content...</div><div class="t sb" style="left:3252.4px;top:710.29px;--l:-0.124px;color:#9b9b9b;">Show connected items only</div><div class="t sb" style="left:3232px;top:768.79px;--l:-0.453px;">Structure</div><div class="t sb" style="left:3231.7px;top:807.99px;--l:-0.59px;color:#0000ee;text-decoration:underline;text-decoration-thickness:2px;text-underline-offset:3px;text-decoration-skip-ink:none;">Recursive</div><div class="t sb" style="left:3232px;top:874.99px;--l:0.451px;">Initial Filter</div><div class="t sb" style="left:3231.7px;top:914.19px;--l:1.318px;color:#0000ee;text-decoration:underline;text-decoration-thickness:2px;text-underline-offset:3px;text-decoration-skip-ink:none;">Off</div><div class="t sb" style="left:3232px;top:980.89px;--l:0.017px;">Initial Selection</div><div class="t sb" style="left:3231.7px;top:1020.09px;--l:-0.031px;color:#0000ee;text-decoration:underline;text-decoration-thickness:2px;text-underline-offset:3px;text-decoration-skip-ink:none;">Query</div><div class="t s" style="left:3208px;top:1122.99px;--l:-0.68px;color:#fff;">Layout</div><div class="t sb" style="left:3252.4px;top:1186.79px;--l:-0.6px;">Group</div><div class="t sb" style="left:3252.4px;top:1232.79px;--l:-0.039px;">No selection shows all rows</div><div class="t sb" style="left:3252.4px;top:1278.79px;--l:-0.565px;color:#9b9b9b;">Single Select</div><div class="t sb" style="left:3252.4px;top:1324.79px;--l:-0.219px;">Show structure controls</div><div class="t sb" style="left:3252.4px;top:1370.79px;--l:0.178px;">Show filter field</div><div class="t sb" style="left:3252.4px;top:1416.79px;--l:0.098px;">Dense layout</div><div class="t sb" style="left:3216px;top:1500.69px;--l:-0.208px;">Sort (Web only)</div><div class="t sb" style="left:3222.6px;top:1534.99px;--l:-0.436px;">Ascending</div><div class="t s" style="left:3208px;top:1640.99px;--l:-0.357px;color:#fff;">Editing</div><div class="t sb" style="left:3258.5px;top:1704.99px;--l:-0.24px;">Create</div><div class="t sb" style="left:3258.5px;top:1750.99px;--l:-0.959px;">Subclass</div><div class="t sb" style="left:3258.5px;top:1796.99px;--l:-1.27px;">Read</div><div class="t sb" style="left:3258.5px;top:1842.99px;--l:-0.188px;">Update</div><div class="t sb" style="left:3258.5px;top:1888.99px;--l:0.159px;">Delete</div><div class="t sb" style="left:3258.5px;top:1934.99px;--l:-0.5px;">Copy</div><div class="t sb" style="left:3258.5px;top:1980.99px;--l:-0.145px;">Bookmark</div><div class="t sb" style="left:3216.5px;top:2052.99px;--l:-1.203px;">Recipe:</div><div class="t sb" style="left:3604.3px;top:2052.99px;--l:-0.24px;">Create</div><div class="t s" style="left:3208px;top:2148.99px;--l:-1.217px;color:#fff;">Web Layout Options</div><div style="left:1714px;top:0px;width:90px;height:2162px;background:linear-gradient(to right,rgba(0,0,0,.24),rgba(0,0,0,.13) 25%,rgba(0,0,0,.05) 55%,rgba(0,0,0,0));"></div><div style="left:0px;top:0px;width:1714px;height:2284px;background:#0a0a40;border-bottom-right-radius:100px 160px;"></div><div style="left:0px;top:174px;width:1650px;height:2000px;background:#f7f7f7;border-top-right-radius:40px;"></div><div style="left:858px;top:0px;width:856px;height:174px;background:#000;border-bottom-left-radius:40px;"></div><svg style="left:858px;top:0" width="856" height="174" viewBox="858 0 856 174" fill="none" stroke-linecap="round" stroke-linejoin="round">
<g stroke="#98a8dc" stroke-width="3.6"><path d="M872.5 62.5L889.3 79L872.5 95.5"/></g>
<g stroke="#fff" stroke-width="3.6"><path d="M894.5 73.5L905 62.8M894.5 84.5L905 95"/></g>
<g stroke="#fff" stroke-width="4"><path d="M946.5 70V54a2 2 0 0 1 2-2h20.500l6.500 7h24a2 2 0 0 1 2 2v9"/><path d="M947 71.500h54a2.500 2.500 0 0 1 2.500 2.800l-3.400 28a3.500 3.500 0 0 1-3.500 3.200H951.400a3.500 3.500 0 0 1-3.500-3.200l-3.400-28a2.500 2.500 0 0 1 2.500-2.800Z"/></g>
<g fill="#6b8ff5" stroke="none"><circle cx="961.8" cy="86" r="4.1"/><circle cx="974" cy="86" r="4.1"/><circle cx="986.100" cy="86" r="4.1"/></g>
<rect x="1074" y="48" width="34" height="34" rx="4" stroke="#98a8dc" stroke-width="3.600" stroke-dasharray="9.500 6.200" stroke-dashoffset="4.7" stroke-linecap="butt"/>
<rect x="1048" y="74" width="34" height="34" rx="2.500" stroke="#fff" stroke-width="4" fill="#000"/>
<path d="M1058.500 84.500L1072 98M1072 84.500L1058.500 98" stroke="#fff" stroke-width="4"/>
<rect x="1156" y="52" width="52" height="52" rx="2.500" stroke="#fff" stroke-width="4"/>
<path d="M1172.500 74.300H1192M1172.500 82.200H1192" stroke="#98a8dc" stroke-width="3.600"/>
<circle cx="1286" cy="77.800" r="29.700" stroke="#999" stroke-width="4"/>
<g stroke="#5c6a8e" stroke-width="3.800"><path d="M1276.600 67.600Q1268.800 78 1275.200 88.200"/><path d="M1266.800 84.600L1275.600 88.500"/><path d="M1295.300 88.600Q1303.300 78 1296.900 67.500"/><path d="M1296.900 67.500L1305.800 71.500"/></g>
<rect x="1360.200" y="48.200" width="59.300" height="59.300" rx="11" stroke="#fff" stroke-width="4.500" fill="#0a0a40"/>
<g stroke="none"><rect x="-5.100" y="-5.100" width="10.200" height="10.200" rx="3.200" transform="translate(1378 66) rotate(45)" fill="#d02f8f"/><rect x="-5.100" y="-5.100" width="10.200" height="10.200" rx="3.200" transform="translate(1402 66) rotate(45)" fill="#5aaee0"/><rect x="-5.100" y="-5.100" width="10.200" height="10.200" rx="3.200" transform="translate(1390 78) rotate(45)" fill="#6f96f8"/><rect x="-5.100" y="-5.100" width="10.200" height="10.200" rx="3.200" transform="translate(1378 90) rotate(45)" fill="#9b4fd8"/><rect x="-5.100" y="-5.100" width="10.200" height="10.200" rx="3.200" transform="translate(1402 90) rotate(45)" fill="#d98d63"/></g>
<circle cx="1494" cy="77.800" r="27.800" stroke="#fff" stroke-width="4"/>
<circle cx="1494" cy="66" r="3.200" fill="#98a8dc" stroke="none"/>
<path d="M1489.500 75.500h5.500v13.500M1488.500 89.300h13" stroke="#98a8dc" stroke-width="3.600" stroke-linecap="round"/>
<path d="M1597.900 48c-9.500 0-16 6.500-16 16.500c0 4 1 12.500 2.500 16.500c2.500 6.500 8 10.500 13.500 10.500s11-4 13.500-10.500c1.500-4 2.500-12.500 2.500-16.500c0-10-6.500-16.500-16-16.500Z" stroke="#98a8dc" stroke-width="3.800"/>
<path d="M1593.200 82.800q4.700 2.400 9.400 0" stroke="#98a8dc" stroke-width="3.600"/>
<path d="M1584.500 92.500l-14 5.500l-2.500 9.200h60l-2.500-9.200l-14-5.500" stroke="#fff" stroke-width="4"/>
</svg><svg style="left:36px;top:320px;" width="40" height="40"><use href="#pf"/></svg><div style="left:36px;top:386px;width:759px;height:57px;background:#dcdfed;border-radius:7px;"></div><div style="left:52px;top:397.8px;width:32px;height:32px;border:4px solid #000;border-radius:50%;box-sizing:border-box;"></div><svg style="left:39px;top:503px;" width="34" height="32"><use href="#brief"/></svg><div style="left:36px;top:566px;width:759px;height:57px;background:#dcdfed;border-radius:7px;"></div><div style="left:52px;top:577.8px;width:32px;height:32px;border:4px solid #000;border-radius:50%;box-sizing:border-box;"></div><svg style="left:36px;top:682px;" width="40" height="40"><use href="#lego"/></svg><div style="left:670px;top:671px;width:141px;height:80px;background:#e4e8f2;border-radius:15px 15px 0 0;"></div><div style="left:20px;top:731px;width:791px;height:1186px;background:#e4e8f2;border-radius:22px 0 22px 22px;"></div><div style="left:654px;top:715px;width:16px;height:16px;background:radial-gradient(circle at 0 0,rgba(0,0,0,0) 15.500px,#e4e8f2 16.5px);"></div><svg style="left:698.5px;top:684.5px;color:#8e8e93;fill:#8e8e93;" width="32.5" height="32.5"><use href="#search"/></svg><div style="left:746.9px;top:697.7px;width:6.6px;height:6.6px;background:#000;border-radius:50%;"></div><div style="left:759.7px;top:697.7px;width:6.6px;height:6.6px;background:#000;border-radius:50%;"></div><div style="left:772.7px;top:697.7px;width:6.6px;height:6.6px;background:#000;border-radius:50%;"></div><div style="left:36px;top:747px;width:759px;height:58px;background:#f7f7f7;border-radius:10px;border-bottom:4px solid #a0a0a0;box-sizing:border-box;"></div><svg style="left:60px;top:760px;color:#000;fill:#000;" width="32" height="32"><use href="#search"/></svg><div style="left:36px;top:821px;width:759px;height:1081px;background:#f7f7f7;border:4px solid #000;border-radius:8px;box-sizing:border-box;"></div><div style="left:40px;top:825px;width:751px;height:48px;background:#92a2d1;border-radius:4px 4px 0 0;"></div><div style="left:40px;top:873px;width:751px;height:96px;background:#9aaade;"></div><svg style="left:54px;top:833px;color:#000;fill:#000;--bg:#92a2d1;" width="32" height="32"><use href="#check"/></svg><svg style="left:107px;top:833.5px;color:#000;fill:#000;" width="32" height="32"><use href="#lego"/></svg><svg style="left:54px;top:881px;color:#000;fill:#000;--bg:#9aaade;" width="32" height="32"><use href="#check"/></svg><svg style="left:107px;top:881.5px;color:#000;fill:#000;" width="32" height="32"><use href="#lego"/></svg><svg style="left:54px;top:929px;color:#000;fill:#000;--bg:#9aaade;" width="32" height="32"><use href="#check"/></svg><svg style="left:107px;top:929.5px;color:#000;fill:#000;" width="32" height="32"><use href="#lego"/></svg><svg style="left:107px;top:977.5px;color:#000;fill:#000;" width="32" height="32"><use href="#lego"/></svg><svg style="left:107px;top:1025.5px;color:#000;fill:#000;" width="32" height="32"><use href="#lego"/></svg><svg style="left:107px;top:1073.5px;color:#000;fill:#000;" width="32" height="32"><use href="#lego"/></svg><svg style="left:107px;top:1121.5px;color:#000;fill:#000;" width="32" height="32"><use href="#lego"/></svg><svg style="left:107px;top:1169.5px;color:#000;fill:#000;" width="32" height="32"><use href="#lego"/></svg><svg style="left:107px;top:1217.5px;color:#000;fill:#000;" width="32" height="32"><use href="#lego"/></svg><svg style="left:107px;top:1265.5px;color:#000;fill:#000;" width="32" height="32"><use href="#lego"/></svg><svg style="left:107px;top:1313.5px;color:#000;fill:#000;" width="32" height="32"><use href="#lego"/></svg><svg style="left:107px;top:1361.5px;color:#000;fill:#000;" width="32" height="32"><use href="#lego"/></svg><svg style="left:107px;top:1409.5px;color:#000;fill:#000;" width="32" height="32"><use href="#lego"/></svg><svg style="left:107px;top:1457.5px;color:#000;fill:#000;" width="32" height="32"><use href="#lego"/></svg><svg style="left:107px;top:1505.5px;color:#000;fill:#000;" width="32" height="32"><use href="#lego"/></svg><svg style="left:107px;top:1553.5px;color:#000;fill:#000;" width="32" height="32"><use href="#lego"/></svg><svg style="left:107px;top:1601.5px;color:#000;fill:#000;" width="32" height="32"><use href="#lego"/></svg><svg style="left:107px;top:1649.5px;color:#000;fill:#000;" width="32" height="32"><use href="#lego"/></svg><svg style="left:107px;top:1697.5px;color:#000;fill:#000;" width="32" height="32"><use href="#lego"/></svg><svg style="left:107px;top:1745.5px;color:#000;fill:#000;" width="32" height="32"><use href="#lego"/></svg><svg style="left:107px;top:1793.5px;color:#000;fill:#000;" width="32" height="32"><use href="#lego"/></svg><div style="left:40px;top:1832px;width:751px;height:2px;background:#000;"></div><div style="left:40px;top:1834px;width:751px;height:64px;background:#f7f7f7;border-radius:0 0 4px 4px;"></div><svg style="left:64px;top:1850px;color:#000;fill:#000;" width="32" height="32"><use href="#plus"/></svg><svg style="left:128px;top:1850px;color:#999;fill:#999;" width="32" height="32"><use href="#pencil"/></svg><svg style="left:192px;top:1850px;color:#000;fill:#000;" width="32" height="32"><use href="#minus"/></svg><svg style="left:256px;top:1850px;color:#000;fill:#000;" width="32" height="32"><use href="#grid"/></svg><svg style="left:843px;top:320px;" width="40" height="40"><use href="#bpp"/></svg><div style="left:843px;top:386px;width:758.6px;height:613px;background:#f7f7f7;border:4px solid #9f9f9f;border-radius:9px;box-sizing:border-box;"></div><div style="left:847px;top:390px;width:750.6px;height:540.6px;background:#dcdfed;overflow:hidden;border-radius:5px 5px 0 0;" id="bpl"></div><div style="left:861px;top:406.2px;width:32px;height:32px;border:4px solid #000;border-radius:50%;box-sizing:border-box;"></div><div style="left:861px;top:470.2px;width:32px;height:32px;border:4px solid #000;border-radius:50%;box-sizing:border-box;"></div><div style="left:861px;top:534.2px;width:32px;height:32px;border:4px solid #000;border-radius:50%;box-sizing:border-box;"></div><div style="left:861px;top:598.2px;width:32px;height:32px;border:4px solid #000;border-radius:50%;box-sizing:border-box;"></div><div style="left:861px;top:662.2px;width:32px;height:32px;border:4px solid #000;border-radius:50%;box-sizing:border-box;"></div><div style="left:861px;top:726.2px;width:32px;height:32px;border:4px solid #000;border-radius:50%;box-sizing:border-box;"></div><div style="left:861px;top:790.2px;width:32px;height:32px;border:4px solid #000;border-radius:50%;box-sizing:border-box;"></div><div style="left:861px;top:854.2px;width:32px;height:32px;border:4px solid #000;border-radius:50%;box-sizing:border-box;"></div><div style="left:861px;top:918.2px;width:32px;height:11.8px;overflow:hidden;"><div style="left:0;top:0;width:32px;height:32px;border:4px solid #000;border-radius:50%;box-sizing:border-box;"></div></div><div style="left:847px;top:930.6px;width:750.6px;height:2px;background:#9f9f9f;"></div><svg style="left:871px;top:948px;color:#9e9e9e;fill:#9e9e9e;" width="32" height="32"><use href="#plus"/></svg><svg style="left:935px;top:948px;color:#9e9e9e;fill:#9e9e9e;" width="32" height="32"><use href="#pencil"/></svg><svg style="left:999px;top:948px;color:#9e9e9e;fill:#9e9e9e;" width="32" height="32"><use href="#minus"/></svg><div style="left:843px;top:1108px;width:758.6px;height:432.5px;background:#f7f7f7;border:4px solid #9f9f9f;border-radius:9px;box-sizing:border-box;"></div><div style="left:847px;top:1304px;width:719px;height:48px;background:#dcdfed;"></div><div style="left:847px;top:1496px;width:719px;height:40.5px;background:#dcdfed;"></div><div style="left:1574px;top:1116px;width:16px;height:282px;background:#d9d9d9;border-radius:8px;"></div><div style="left:922px;top:1151px;width:2px;height:34px;background:#d0d0d0;"></div><div style="left:923px;top:1183px;width:20px;height:2px;background:#d0d0d0;"></div><div style="left:962px;top:1199px;width:2px;height:34px;background:#d0d0d0;"></div><div style="left:963px;top:1231px;width:20px;height:2px;background:#d0d0d0;"></div><div style="left:1002px;top:1247px;width:2px;height:289.5px;background:#d0d0d0;"></div><div style="left:1003px;top:1279px;width:20px;height:2px;background:#d0d0d0;"></div><div style="left:1003px;top:1471px;width:20px;height:2px;background:#d0d0d0;"></div><div style="left:1042px;top:1295px;width:2px;height:130px;background:#d0d0d0;"></div><div style="left:1043px;top:1327px;width:52px;height:2px;background:#d0d0d0;"></div><div style="left:1043px;top:1375px;width:52px;height:2px;background:#d0d0d0;"></div><div style="left:1043px;top:1423px;width:52px;height:2px;background:#d0d0d0;"></div><div style="left:1042px;top:1487px;width:2px;height:34px;background:#d0d0d0;"></div><div style="left:1043px;top:1519px;width:52px;height:2px;background:#d0d0d0;"></div><svg style="left:915.7px;top:1130.4px;color:#666;fill:#666;" width="14.6" height="9.1"><use href="#chev"/></svg><svg style="left:949.7px;top:1122.8px;color:#666;fill:#666;" width="27" height="27"><use href="#fu"/></svg><svg style="left:955.7px;top:1178.4px;color:#666;fill:#666;" width="14.6" height="9.1"><use href="#chev"/></svg><svg style="left:989px;top:1168.8px;color:#666;fill:#666;" width="28" height="32"><use href="#hex"/></svg><svg style="left:995.7px;top:1226.4px;color:#666;fill:#666;" width="14.6" height="9.1"><use href="#chev"/></svg><svg style="left:1027px;top:1217.6px;color:#666;fill:#666;" width="32.3" height="29.5"><use href="#legof"/></svg><svg style="left:1035.7px;top:1274.4px;color:#666;fill:#666;" width="14.6" height="9.1"><use href="#chev"/></svg><svg style="left:1067px;top:1265.6px;color:#666;fill:#666;" width="32.3" height="29.5"><use href="#legof"/></svg><svg style="left:1107px;top:1313.6px;color:#000;fill:#000;" width="32.3" height="29.5"><use href="#legof"/></svg><svg style="left:1107px;top:1361.6px;color:#666;fill:#666;" width="32.3" height="29.5"><use href="#legof"/></svg><svg style="left:1107px;top:1409.6px;color:#666;fill:#666;" width="32.3" height="29.5"><use href="#legof"/></svg><svg style="left:1035.7px;top:1466.4px;color:#666;fill:#666;" width="14.6" height="9.1"><use href="#chev"/></svg><svg style="left:1067px;top:1457.6px;color:#666;fill:#666;" width="32.3" height="29.5"><use href="#legof"/></svg><svg style="left:1107px;top:1505.6px;color:#666;fill:#666;clip-path:inset(0 0 3px 0);" width="32.3" height="29.5"><use href="#legof"/></svg><div style="left:859px;top:1312.5px;width:32px;height:32px;border:4px solid #000;border-radius:50%;box-sizing:border-box;"></div><div style="left:859px;top:1504.5px;width:32px;height:32px;overflow:hidden;"><div style="left:0;top:0;width:32px;height:32px;border:4px solid #5f5f66;border-radius:50%;box-sizing:border-box;"></div></div><div style="left:843px;top:1649.5px;width:758.3px;height:251.5px;background:#f7f7f7;border:4px solid #9f9f9f;border-radius:9px;box-sizing:border-box;overflow:hidden;"></div><div style="left:847px;top:1653.5px;width:750.3px;height:63.5px;background:#dcdfed;border-radius:5px 5px 0 0;"></div><div style="left:861px;top:1669px;width:32px;height:32px;border:4px solid #000;border-radius:50%;box-sizing:border-box;"></div><svg style="left:918px;top:1668.5px;color:#000;fill:#000;fill:#e8ecfb;" width="24" height="32"><use href="#drop"/></svg><svg style="left:918px;top:1732.5px;color:#6f6f6f;fill:#6f6f6f;fill:#646464;" width="24" height="32"><use href="#drop"/></svg><svg style="left:918px;top:1796.5px;color:#777;fill:#777;fill:#94b4fa;" width="24" height="32"><use href="#drop"/></svg><svg style="left:918px;top:1860.5px;color:#777;fill:#777;fill:#f08080;clip-path:inset(0 0 6px 0);" width="24" height="32"><use href="#drop"/></svg><div class="t hd" style="right:3555.5px;top:59.96px;--l:0.009px;color:#fff;">omponents</div><div class="t h27" style="left:85.5px;top:323.44px;--l:-0.153px;">Product Family</div><div class="t l23" style="left:105px;top:395.53px;--l:0.45px;">Jupiterr, Marrz, Venus</div><div class="t l23" style="left:695px;top:395.53px;--l:-0.208px;">(<i>3</i>)</div><div class="t h27" style="left:85.5px;top:503.44px;--l:-0.93px;">Business Area</div><div class="t l23" style="left:105px;top:575.53px;--l:0.384px;">Home, Office</div><div class="t l23" style="left:695px;top:575.53px;--l:-0.208px;">(<i>2</i>)</div><div class="t h27" style="left:85.2px;top:684.64px;--l:-0.173px;">Product Specification Instance</div><div class="t l23" style="left:107.6px;top:755.53px;--l:0.59px;color:#9b9b9b;">Type to find</div><div class="t b23" style="left:147.5px;top:830.03px;--l:0.566px;">Jupiter Wardrobe JW01-11</div><div class="t l23" style="left:147.5px;top:878.03px;--l:0.206px;">Marrz Cabinet Frame, White, <i>60</i>x<i>60</i>x<i>140</i> cm (MCFW<i>012</i>-<i>15</i>)</div><div class="t l23" style="left:147.5px;top:926.03px;--l:0.069px;">Venus Sink VS<i>01</i>-<i>13</i> <i>70</i>x<i>40</i>x<i>60</i></div><div class="t l23" style="left:147.5px;top:974.03px;--l:0.579px;">Jupiter Wardrobe JW<i>01</i>-<i>1</i></div><div class="t l23" style="left:147.5px;top:1022.03px;--l:0.567px;">Jupiter Wardrobe JW<i>01</i>-<i>10</i></div><div class="t l23" style="left:147.5px;top:1070.03px;--l:0.517px;">Jupiter Wardrobe JW<i>01</i>-<i>17</i> <i>200</i>x<i>100</i>x<i>130</i></div><div class="t l23" style="left:147.5px;top:1118.03px;--l:0.567px;">Jupiter Wardrobe JW<i>01</i>-<i>19</i></div><div class="t l23" style="left:147.5px;top:1166.03px;--l:0.567px;">Jupiter Wardrobe JW<i>01</i>-<i>20</i></div><div class="t l23" style="left:147.5px;top:1214.03px;--l:0.591px;">Jupiter Wardrobe JW<i>01</i>-<i>2</i> <i>110</i>x<i>90</i>x<i>130</i></div><div class="t l23" style="left:147.5px;top:1262.03px;--l:0.541px;">Jupiter Wardrobe JW<i>01</i>-<i>3</i> <i>120</i>x<i>90</i>x<i>130</i></div><div class="t l23" style="left:147.5px;top:1310.03px;--l:0.577px;">Jupiter Wardrobe JW<i>01</i>-<i>4</i> <i>130</i>x<i>110</i>x<i>130</i></div><div class="t l23" style="left:147.5px;top:1358.03px;--l:0.528px;">Jupiter Wardrobe JW<i>01</i>-<i>5</i> <i>130</i>x<i>120</i>x<i>130</i></div><div class="t l23" style="left:147.5px;top:1406.03px;--l:0.528px;">Jupiter Wardrobe JW<i>01</i>-<i>6</i> <i>130</i>x<i>130</i>x<i>130</i></div><div class="t l23" style="left:147.5px;top:1454.03px;--l:0.541px;">Jupiter Wardrobe JW<i>01</i>-<i>7</i> <i>140</i>x<i>90</i>x<i>130</i></div><div class="t l23" style="left:147.5px;top:1502.03px;--l:0.528px;">Jupiter Wardrobe JW<i>01</i>-<i>9</i> <i>140</i>x<i>100</i>x<i>130</i></div><div class="t l23" style="left:147.5px;top:1550.03px;--l:0.475px;">Jupiter Wardrobe JW<i>01</i>HM-<i>1</i> <i>100</i>x<i>90</i>x<i>130</i></div><div class="t l23" style="left:147.5px;top:1598.03px;--l:0.481px;">Jupiter Wardrobe JW<i>01</i>HM-<i>2</i></div><div class="t l23" style="left:147.5px;top:1646.03px;--l:0.475px;">Jupiter Wardrobe JW<i>01</i>HM-<i>3</i> <i>120</i>x<i>90</i>x<i>130</i></div><div class="t l23" style="left:147.5px;top:1694.03px;--l:0.517px;">Jupiter Wardrobe JW<i>01</i>HM-<i>4</i> <i>130</i>x<i>110</i>x<i>130</i></div><div class="t l23" style="left:147.5px;top:1742.03px;--l:0.471px;">Jupiter Wardrobe JW<i>01</i>HM-<i>5</i> <i>130</i>x<i>120</i>x<i>130</i></div><div class="t l23" style="left:147.5px;top:1790.03px;--l:0.471px;">Jupiter Wardrobe JW<i>01</i>HM-<i>6</i> <i>130</i>x<i>130</i>x<i>130</i></div><div class="t l23" style="right:3073px;top:1847.03px;--l:0.551px;color:#7a7a7a;"><i>3</i> / <i>50</i> items</div><div class="t h27" style="left:892.5px;top:323.64px;--l:-0.358px;">Base Product Part</div><div class="t b23" style="left:914.6px;top:403.23px;--l:0.597px;">Back Panel 400x1600x400 mm (10221162)</div><div class="t b23" style="left:914.6px;top:467.23px;--l:0.64px;">Bottom Panel 400x800x400 mm (10081483)</div><div class="t b23" style="left:914.6px;top:531.23px;--l:0.64px;">Cabinet Frame 600x1800x400 mm (31061452)</div><div class="t b23" style="left:914.6px;top:595.23px;--l:0.274px;">Cabinet Light Source 0.84kg (LY 002)</div><div class="t b23" style="left:914.6px;top:659.23px;--l:0.244px;">Cabinet Light Source 1.12kg (LG 005)</div><div class="t b23" style="left:914.6px;top:723.23px;--l:0.615px;">Door Panel 400x800x400 mm (10081484)</div><div class="t b23" style="left:914.6px;top:787.23px;--l:0.636px;">Front Panel 400x800x400 mm (10221229)</div><div class="t b23" style="left:914.6px;top:851.23px;--l:0.625px;">Side Panel 400x600x400 mm (10221159)</div><div class="t b23" style="left:914.6px;top:915.23px;--l:0.662px;clip-path:inset(0 0 24.500px 0);">Top Panel 600x1800x400 mm (10221155)</div><div class="t h27" style="left:843px;top:1045.34px;">Product Unit Taxonomy</div><div class="t l23" style="left:987.8px;top:1117.03px;--l:0.819px;color:#666;">Functional Unit</div><div class="t l23" style="left:1028.3px;top:1165.03px;--l:0.911px;color:#666;">Product Unit</div><div class="t l23" style="left:1067.4px;top:1213.03px;--l:0.645px;color:#666;">Product Concept</div><div class="t l23" style="left:1107.6px;top:1261.03px;--l:0.869px;color:#666;">Jupiterr Wardrobe</div><div class="t b23" style="left:1147.4px;top:1309.03px;--l:0.562px;">Jupiterr Wardrobe Wide</div><div class="t l23" style="left:1147.4px;top:1357.03px;--l:0.734px;color:#666;">Jupiterr Wardrobe Small</div><div class="t l23" style="left:1147.4px;top:1405.03px;--l:0.786px;color:#666;">Jupiterr Wardrobe Tall</div><div class="t l23" style="left:1107.6px;top:1453.03px;--l:0.301px;color:#666;">Marrz Cabinet Frame</div><div class="t l23" style="left:1147.4px;top:1501.03px;--l:0.076px;color:#666;clip-path:inset(0 0 3px 0);">Marrz Cabinet Frame (MCFW<i>012</i>)</div><div class="t h27" style="left:843px;top:1586.44px;--l:-0.2px;">Color</div><div class="t l23" style="left:954px;top:1666.03px;--l:0.541px;color:#000;">White</div><div class="t l23" style="left:954px;top:1730.03px;--l:0.55px;color:#666;">Black</div><div class="t l23" style="left:954px;top:1794.03px;--l:0.488px;color:#666;">Blue</div><div class="t l23" style="left:954px;top:1858.03px;--l:-0.401px;color:#666;">Red</div></body></html>
